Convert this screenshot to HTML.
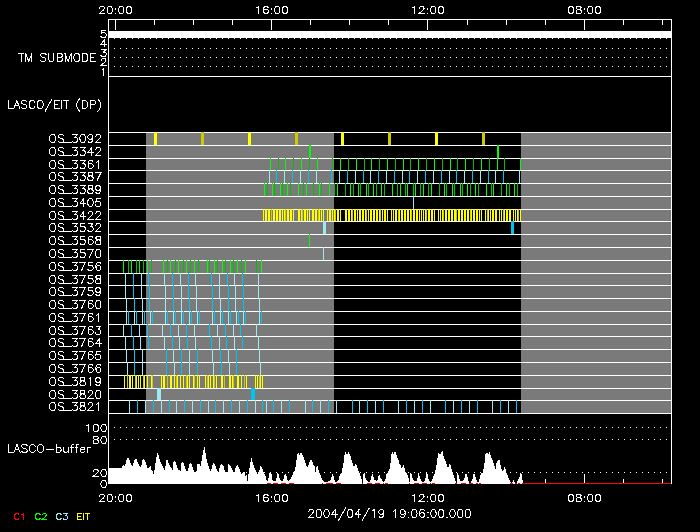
<!DOCTYPE html>
<html><head><meta charset="utf-8"><style>
html,body{margin:0;padding:0;background:#000;width:700px;height:532px;overflow:hidden}
svg{display:block}
</style></head><body>
<svg width="700" height="532" viewBox="0 0 700 532" shape-rendering="crispEdges">
<rect x="0" y="0" width="700" height="532" fill="#000"/>
<rect x="146" y="133" width="188" height="280" fill="#7a7a7a"/>
<rect x="521" y="133" width="150" height="280" fill="#7a7a7a"/>
<rect x="108" y="132" width="564" height="1" fill="#fff"/>
<rect x="108" y="145" width="564" height="1" fill="#fff"/>
<rect x="108" y="158" width="564" height="1" fill="#fff"/>
<rect x="108" y="170" width="564" height="1" fill="#fff"/>
<rect x="108" y="183" width="564" height="1" fill="#fff"/>
<rect x="108" y="196" width="564" height="1" fill="#fff"/>
<rect x="108" y="209" width="564" height="1" fill="#fff"/>
<rect x="108" y="221" width="564" height="1" fill="#fff"/>
<rect x="108" y="234" width="564" height="1" fill="#fff"/>
<rect x="108" y="247" width="564" height="1" fill="#fff"/>
<rect x="108" y="260" width="564" height="1" fill="#fff"/>
<rect x="108" y="273" width="564" height="1" fill="#fff"/>
<rect x="108" y="285" width="564" height="1" fill="#fff"/>
<rect x="108" y="298" width="564" height="1" fill="#fff"/>
<rect x="108" y="311" width="564" height="1" fill="#fff"/>
<rect x="108" y="324" width="564" height="1" fill="#fff"/>
<rect x="108" y="336" width="564" height="1" fill="#fff"/>
<rect x="108" y="349" width="564" height="1" fill="#fff"/>
<rect x="108" y="362" width="564" height="1" fill="#fff"/>
<rect x="108" y="375" width="564" height="1" fill="#fff"/>
<rect x="108" y="388" width="564" height="1" fill="#fff"/>
<rect x="108" y="400" width="564" height="1" fill="#fff"/>
<rect x="108" y="413" width="564" height="1" fill="#fff"/>
<rect x="154" y="132" width="3" height="13" fill="#ffff00"/>
<rect x="201" y="132" width="3" height="13" fill="#cccc00"/>
<rect x="248" y="132" width="3" height="13" fill="#ffff00"/>
<rect x="295" y="132" width="3" height="13" fill="#cccc00"/>
<rect x="341" y="132" width="3" height="13" fill="#ffff00"/>
<rect x="388" y="132" width="3" height="13" fill="#cccc00"/>
<rect x="435" y="132" width="3" height="13" fill="#ffff00"/>
<rect x="482" y="132" width="3" height="13" fill="#cccc00"/>
<rect x="309" y="145" width="2" height="13" fill="#00ff00"/>
<rect x="497" y="145" width="2" height="13" fill="#00ff00"/>
<rect x="270" y="158" width="1" height="12" fill="#00ff00"/>
<rect x="278" y="158" width="1" height="12" fill="#00c000"/>
<rect x="285" y="158" width="1" height="12" fill="#00ff00"/>
<rect x="293" y="158" width="1" height="12" fill="#00c000"/>
<rect x="301" y="158" width="1" height="12" fill="#00ff00"/>
<rect x="309" y="158" width="1" height="12" fill="#00c000"/>
<rect x="317" y="158" width="1" height="12" fill="#00ff00"/>
<rect x="332" y="158" width="1" height="12" fill="#00c000"/>
<rect x="340" y="158" width="1" height="12" fill="#00ff00"/>
<rect x="348" y="158" width="1" height="12" fill="#00c000"/>
<rect x="356" y="158" width="1" height="12" fill="#00ff00"/>
<rect x="364" y="158" width="1" height="12" fill="#00c000"/>
<rect x="371" y="158" width="1" height="12" fill="#00ff00"/>
<rect x="379" y="158" width="1" height="12" fill="#00c000"/>
<rect x="387" y="158" width="1" height="12" fill="#00ff00"/>
<rect x="395" y="158" width="1" height="12" fill="#00c000"/>
<rect x="403" y="158" width="1" height="12" fill="#00ff00"/>
<rect x="410" y="158" width="1" height="12" fill="#00c000"/>
<rect x="418" y="158" width="1" height="12" fill="#00ff00"/>
<rect x="426" y="158" width="1" height="12" fill="#00c000"/>
<rect x="434" y="158" width="1" height="12" fill="#00ff00"/>
<rect x="442" y="158" width="1" height="12" fill="#00c000"/>
<rect x="450" y="158" width="1" height="12" fill="#00ff00"/>
<rect x="457" y="158" width="1" height="12" fill="#00c000"/>
<rect x="465" y="158" width="1" height="12" fill="#00ff00"/>
<rect x="473" y="158" width="1" height="12" fill="#00c000"/>
<rect x="481" y="158" width="1" height="12" fill="#00ff00"/>
<rect x="489" y="158" width="1" height="12" fill="#00c000"/>
<rect x="497" y="158" width="1" height="12" fill="#00ff00"/>
<rect x="504" y="158" width="1" height="12" fill="#00c000"/>
<rect x="520" y="158" width="1" height="12" fill="#00ff00"/>
<rect x="269" y="170" width="1" height="13" fill="#a0e8f4"/>
<rect x="276" y="170" width="1" height="13" fill="#00c4f0"/>
<rect x="284" y="170" width="1" height="13" fill="#a0e8f4"/>
<rect x="292" y="170" width="1" height="13" fill="#00c4f0"/>
<rect x="300" y="170" width="1" height="13" fill="#a0e8f4"/>
<rect x="308" y="170" width="1" height="13" fill="#00c4f0"/>
<rect x="316" y="170" width="1" height="13" fill="#a0e8f4"/>
<rect x="331" y="170" width="1" height="13" fill="#00c4f0"/>
<rect x="339" y="170" width="1" height="13" fill="#a0e8f4"/>
<rect x="347" y="170" width="1" height="13" fill="#00c4f0"/>
<rect x="355" y="170" width="1" height="13" fill="#a0e8f4"/>
<rect x="363" y="170" width="1" height="13" fill="#00c4f0"/>
<rect x="370" y="170" width="1" height="13" fill="#a0e8f4"/>
<rect x="378" y="170" width="1" height="13" fill="#00c4f0"/>
<rect x="386" y="170" width="1" height="13" fill="#a0e8f4"/>
<rect x="394" y="170" width="1" height="13" fill="#00c4f0"/>
<rect x="402" y="170" width="1" height="13" fill="#a0e8f4"/>
<rect x="409" y="170" width="1" height="13" fill="#00c4f0"/>
<rect x="417" y="170" width="1" height="13" fill="#a0e8f4"/>
<rect x="425" y="170" width="1" height="13" fill="#00c4f0"/>
<rect x="433" y="170" width="1" height="13" fill="#a0e8f4"/>
<rect x="441" y="170" width="1" height="13" fill="#00c4f0"/>
<rect x="449" y="170" width="1" height="13" fill="#a0e8f4"/>
<rect x="456" y="170" width="1" height="13" fill="#00c4f0"/>
<rect x="464" y="170" width="1" height="13" fill="#a0e8f4"/>
<rect x="472" y="170" width="1" height="13" fill="#00c4f0"/>
<rect x="480" y="170" width="1" height="13" fill="#a0e8f4"/>
<rect x="488" y="170" width="1" height="13" fill="#00c4f0"/>
<rect x="495" y="170" width="1" height="13" fill="#a0e8f4"/>
<rect x="503" y="170" width="1" height="13" fill="#00c4f0"/>
<rect x="519" y="170" width="1" height="13" fill="#a0e8f4"/>
<rect x="264" y="183" width="1" height="13" fill="#00ff00"/>
<rect x="267" y="183" width="1" height="13" fill="#00c000"/>
<rect x="272" y="183" width="1" height="13" fill="#00ff00"/>
<rect x="274" y="183" width="1" height="13" fill="#00c000"/>
<rect x="280" y="183" width="1" height="13" fill="#00ff00"/>
<rect x="282" y="183" width="1" height="13" fill="#00c000"/>
<rect x="287" y="183" width="1" height="13" fill="#00ff00"/>
<rect x="290" y="183" width="1" height="13" fill="#00c000"/>
<rect x="298" y="183" width="1" height="13" fill="#00ff00"/>
<rect x="303" y="183" width="1" height="13" fill="#00c000"/>
<rect x="306" y="183" width="1" height="13" fill="#00ff00"/>
<rect x="313" y="183" width="1" height="13" fill="#00c000"/>
<rect x="319" y="183" width="1" height="13" fill="#00ff00"/>
<rect x="321" y="183" width="1" height="13" fill="#00c000"/>
<rect x="329" y="183" width="1" height="13" fill="#00ff00"/>
<rect x="334" y="183" width="1" height="13" fill="#00c000"/>
<rect x="337" y="183" width="1" height="13" fill="#00ff00"/>
<rect x="345" y="183" width="1" height="13" fill="#00c000"/>
<rect x="350" y="183" width="1" height="13" fill="#00ff00"/>
<rect x="353" y="183" width="1" height="13" fill="#00c000"/>
<rect x="358" y="183" width="1" height="13" fill="#00ff00"/>
<rect x="360" y="183" width="1" height="13" fill="#00c000"/>
<rect x="366" y="183" width="1" height="13" fill="#00ff00"/>
<rect x="368" y="183" width="1" height="13" fill="#00c000"/>
<rect x="373" y="183" width="1" height="13" fill="#00ff00"/>
<rect x="376" y="183" width="1" height="13" fill="#00c000"/>
<rect x="381" y="183" width="1" height="13" fill="#00ff00"/>
<rect x="384" y="183" width="1" height="13" fill="#00c000"/>
<rect x="392" y="183" width="1" height="13" fill="#00ff00"/>
<rect x="397" y="183" width="1" height="13" fill="#00c000"/>
<rect x="400" y="183" width="1" height="13" fill="#00ff00"/>
<rect x="405" y="183" width="1" height="13" fill="#00c000"/>
<rect x="407" y="183" width="1" height="13" fill="#00ff00"/>
<rect x="413" y="183" width="1" height="13" fill="#00c000"/>
<rect x="415" y="183" width="1" height="13" fill="#00ff00"/>
<rect x="420" y="183" width="1" height="13" fill="#00c000"/>
<rect x="423" y="183" width="1" height="13" fill="#00ff00"/>
<rect x="428" y="183" width="1" height="13" fill="#00c000"/>
<rect x="431" y="183" width="1" height="13" fill="#00ff00"/>
<rect x="439" y="183" width="1" height="13" fill="#00c000"/>
<rect x="444" y="183" width="1" height="13" fill="#00ff00"/>
<rect x="446" y="183" width="1" height="13" fill="#00c000"/>
<rect x="452" y="183" width="1" height="13" fill="#00ff00"/>
<rect x="454" y="183" width="1" height="13" fill="#00c000"/>
<rect x="460" y="183" width="1" height="13" fill="#00ff00"/>
<rect x="462" y="183" width="1" height="13" fill="#00c000"/>
<rect x="467" y="183" width="1" height="13" fill="#00ff00"/>
<rect x="470" y="183" width="1" height="13" fill="#00c000"/>
<rect x="475" y="183" width="1" height="13" fill="#00ff00"/>
<rect x="478" y="183" width="1" height="13" fill="#00c000"/>
<rect x="486" y="183" width="1" height="13" fill="#00ff00"/>
<rect x="491" y="183" width="1" height="13" fill="#00c000"/>
<rect x="493" y="183" width="1" height="13" fill="#00ff00"/>
<rect x="501" y="183" width="1" height="13" fill="#00c000"/>
<rect x="506" y="183" width="1" height="13" fill="#00ff00"/>
<rect x="509" y="183" width="1" height="13" fill="#00c000"/>
<rect x="514" y="183" width="1" height="13" fill="#00ff00"/>
<rect x="517" y="183" width="1" height="13" fill="#00c000"/>
<rect x="413" y="196" width="1" height="13" fill="#a0e8f4"/>
<rect x="263" y="209" width="1" height="12" fill="#ffff00"/>
<rect x="265" y="209" width="1" height="12" fill="#ffff00"/>
<rect x="266" y="209" width="1" height="12" fill="#ffff00"/>
<rect x="268" y="209" width="1" height="12" fill="#ffff00"/>
<rect x="269" y="209" width="1" height="12" fill="#ffff00"/>
<rect x="271" y="209" width="1" height="12" fill="#cccc00"/>
<rect x="273" y="209" width="1" height="12" fill="#ffff00"/>
<rect x="274" y="209" width="1" height="12" fill="#ffff00"/>
<rect x="276" y="209" width="1" height="12" fill="#ffff00"/>
<rect x="277" y="209" width="1" height="12" fill="#ffff00"/>
<rect x="279" y="209" width="1" height="12" fill="#ffff00"/>
<rect x="280" y="209" width="1" height="12" fill="#ffff00"/>
<rect x="282" y="209" width="1" height="12" fill="#ffff00"/>
<rect x="284" y="209" width="1" height="12" fill="#ffff00"/>
<rect x="285" y="209" width="1" height="12" fill="#cccc00"/>
<rect x="287" y="209" width="1" height="12" fill="#ffff00"/>
<rect x="288" y="209" width="1" height="12" fill="#ffff00"/>
<rect x="290" y="209" width="1" height="12" fill="#ffff00"/>
<rect x="291" y="209" width="1" height="12" fill="#ffff00"/>
<rect x="293" y="209" width="1" height="12" fill="#ffff00"/>
<rect x="298" y="209" width="1" height="12" fill="#ffff00"/>
<rect x="299" y="209" width="1" height="12" fill="#ffff00"/>
<rect x="301" y="209" width="1" height="12" fill="#ffff00"/>
<rect x="302" y="209" width="1" height="12" fill="#cccc00"/>
<rect x="304" y="209" width="1" height="12" fill="#ffff00"/>
<rect x="305" y="209" width="1" height="12" fill="#ffff00"/>
<rect x="307" y="209" width="1" height="12" fill="#ffff00"/>
<rect x="309" y="209" width="1" height="12" fill="#ffff00"/>
<rect x="312" y="209" width="1" height="12" fill="#ffff00"/>
<rect x="313" y="209" width="1" height="12" fill="#ffff00"/>
<rect x="315" y="209" width="1" height="12" fill="#ffff00"/>
<rect x="316" y="209" width="1" height="12" fill="#ffff00"/>
<rect x="318" y="209" width="1" height="12" fill="#cccc00"/>
<rect x="319" y="209" width="1" height="12" fill="#ffff00"/>
<rect x="321" y="209" width="1" height="12" fill="#ffff00"/>
<rect x="323" y="209" width="1" height="12" fill="#ffff00"/>
<rect x="327" y="209" width="1" height="12" fill="#ffff00"/>
<rect x="329" y="209" width="1" height="12" fill="#ffff00"/>
<rect x="330" y="209" width="1" height="12" fill="#ffff00"/>
<rect x="332" y="209" width="1" height="12" fill="#ffff00"/>
<rect x="334" y="209" width="1" height="12" fill="#ffff00"/>
<rect x="335" y="209" width="1" height="12" fill="#cccc00"/>
<rect x="337" y="209" width="1" height="12" fill="#ffff00"/>
<rect x="338" y="209" width="1" height="12" fill="#ffff00"/>
<rect x="340" y="209" width="1" height="12" fill="#ffff00"/>
<rect x="345" y="209" width="1" height="12" fill="#ffff00"/>
<rect x="346" y="209" width="1" height="12" fill="#ffff00"/>
<rect x="348" y="209" width="1" height="12" fill="#ffff00"/>
<rect x="349" y="209" width="1" height="12" fill="#ffff00"/>
<rect x="351" y="209" width="1" height="12" fill="#ffff00"/>
<rect x="352" y="209" width="1" height="12" fill="#cccc00"/>
<rect x="354" y="209" width="1" height="12" fill="#ffff00"/>
<rect x="355" y="209" width="1" height="12" fill="#ffff00"/>
<rect x="357" y="209" width="1" height="12" fill="#ffff00"/>
<rect x="359" y="209" width="1" height="12" fill="#ffff00"/>
<rect x="360" y="209" width="1" height="12" fill="#ffff00"/>
<rect x="362" y="209" width="1" height="12" fill="#ffff00"/>
<rect x="363" y="209" width="1" height="12" fill="#ffff00"/>
<rect x="365" y="209" width="1" height="12" fill="#ffff00"/>
<rect x="366" y="209" width="1" height="12" fill="#cccc00"/>
<rect x="368" y="209" width="1" height="12" fill="#ffff00"/>
<rect x="370" y="209" width="1" height="12" fill="#ffff00"/>
<rect x="371" y="209" width="1" height="12" fill="#ffff00"/>
<rect x="373" y="209" width="1" height="12" fill="#ffff00"/>
<rect x="374" y="209" width="1" height="12" fill="#ffff00"/>
<rect x="376" y="209" width="1" height="12" fill="#ffff00"/>
<rect x="377" y="209" width="1" height="12" fill="#ffff00"/>
<rect x="379" y="209" width="1" height="12" fill="#ffff00"/>
<rect x="380" y="209" width="1" height="12" fill="#cccc00"/>
<rect x="382" y="209" width="1" height="12" fill="#ffff00"/>
<rect x="384" y="209" width="1" height="12" fill="#ffff00"/>
<rect x="385" y="209" width="1" height="12" fill="#ffff00"/>
<rect x="387" y="209" width="1" height="12" fill="#ffff00"/>
<rect x="391" y="209" width="1" height="12" fill="#ffff00"/>
<rect x="393" y="209" width="1" height="12" fill="#ffff00"/>
<rect x="395" y="209" width="1" height="12" fill="#ffff00"/>
<rect x="396" y="209" width="1" height="12" fill="#ffff00"/>
<rect x="398" y="209" width="1" height="12" fill="#cccc00"/>
<rect x="399" y="209" width="1" height="12" fill="#ffff00"/>
<rect x="401" y="209" width="1" height="12" fill="#ffff00"/>
<rect x="402" y="209" width="1" height="12" fill="#ffff00"/>
<rect x="404" y="209" width="1" height="12" fill="#ffff00"/>
<rect x="405" y="209" width="1" height="12" fill="#ffff00"/>
<rect x="407" y="209" width="1" height="12" fill="#ffff00"/>
<rect x="408" y="209" width="1" height="12" fill="#ffff00"/>
<rect x="410" y="209" width="1" height="12" fill="#ffff00"/>
<rect x="411" y="209" width="1" height="12" fill="#cccc00"/>
<rect x="413" y="209" width="1" height="12" fill="#ffff00"/>
<rect x="414" y="209" width="1" height="12" fill="#ffff00"/>
<rect x="416" y="209" width="1" height="12" fill="#ffff00"/>
<rect x="417" y="209" width="1" height="12" fill="#ffff00"/>
<rect x="419" y="209" width="1" height="12" fill="#ffff00"/>
<rect x="421" y="209" width="1" height="12" fill="#ffff00"/>
<rect x="423" y="209" width="1" height="12" fill="#ffff00"/>
<rect x="425" y="209" width="1" height="12" fill="#ffff00"/>
<rect x="426" y="209" width="1" height="12" fill="#cccc00"/>
<rect x="428" y="209" width="1" height="12" fill="#ffff00"/>
<rect x="429" y="209" width="1" height="12" fill="#ffff00"/>
<rect x="431" y="209" width="1" height="12" fill="#ffff00"/>
<rect x="432" y="209" width="1" height="12" fill="#ffff00"/>
<rect x="434" y="209" width="1" height="12" fill="#ffff00"/>
<rect x="438" y="209" width="1" height="12" fill="#ffff00"/>
<rect x="440" y="209" width="1" height="12" fill="#ffff00"/>
<rect x="442" y="209" width="1" height="12" fill="#ffff00"/>
<rect x="443" y="209" width="1" height="12" fill="#cccc00"/>
<rect x="445" y="209" width="1" height="12" fill="#ffff00"/>
<rect x="446" y="209" width="1" height="12" fill="#ffff00"/>
<rect x="448" y="209" width="1" height="12" fill="#ffff00"/>
<rect x="449" y="209" width="1" height="12" fill="#ffff00"/>
<rect x="451" y="209" width="1" height="12" fill="#ffff00"/>
<rect x="452" y="209" width="1" height="12" fill="#ffff00"/>
<rect x="454" y="209" width="1" height="12" fill="#ffff00"/>
<rect x="455" y="209" width="1" height="12" fill="#ffff00"/>
<rect x="456" y="209" width="1" height="12" fill="#cccc00"/>
<rect x="458" y="209" width="1" height="12" fill="#ffff00"/>
<rect x="459" y="209" width="1" height="12" fill="#ffff00"/>
<rect x="461" y="209" width="1" height="12" fill="#ffff00"/>
<rect x="462" y="209" width="1" height="12" fill="#ffff00"/>
<rect x="464" y="209" width="1" height="12" fill="#ffff00"/>
<rect x="465" y="209" width="1" height="12" fill="#ffff00"/>
<rect x="467" y="209" width="1" height="12" fill="#ffff00"/>
<rect x="468" y="209" width="1" height="12" fill="#ffff00"/>
<rect x="470" y="209" width="1" height="12" fill="#cccc00"/>
<rect x="471" y="209" width="1" height="12" fill="#ffff00"/>
<rect x="473" y="209" width="1" height="12" fill="#ffff00"/>
<rect x="474" y="209" width="1" height="12" fill="#ffff00"/>
<rect x="476" y="209" width="1" height="12" fill="#ffff00"/>
<rect x="477" y="209" width="1" height="12" fill="#ffff00"/>
<rect x="479" y="209" width="1" height="12" fill="#ffff00"/>
<rect x="481" y="209" width="1" height="12" fill="#ffff00"/>
<rect x="485" y="209" width="1" height="12" fill="#ffff00"/>
<rect x="487" y="209" width="1" height="12" fill="#cccc00"/>
<rect x="488" y="209" width="1" height="12" fill="#ffff00"/>
<rect x="490" y="209" width="1" height="12" fill="#ffff00"/>
<rect x="492" y="209" width="1" height="12" fill="#ffff00"/>
<rect x="493" y="209" width="1" height="12" fill="#ffff00"/>
<rect x="495" y="209" width="1" height="12" fill="#ffff00"/>
<rect x="496" y="209" width="1" height="12" fill="#ffff00"/>
<rect x="499" y="209" width="1" height="12" fill="#ffff00"/>
<rect x="501" y="209" width="1" height="12" fill="#ffff00"/>
<rect x="503" y="209" width="1" height="12" fill="#cccc00"/>
<rect x="504" y="209" width="1" height="12" fill="#ffff00"/>
<rect x="506" y="209" width="1" height="12" fill="#ffff00"/>
<rect x="507" y="209" width="1" height="12" fill="#ffff00"/>
<rect x="509" y="209" width="1" height="12" fill="#ffff00"/>
<rect x="510" y="209" width="1" height="12" fill="#ffff00"/>
<rect x="513" y="209" width="1" height="12" fill="#ffff00"/>
<rect x="515" y="209" width="1" height="12" fill="#ffff00"/>
<rect x="517" y="209" width="1" height="12" fill="#ffff00"/>
<rect x="518" y="209" width="1" height="12" fill="#cccc00"/>
<rect x="520" y="209" width="1" height="12" fill="#ffff00"/>
<rect x="323" y="221" width="3" height="13" fill="#a0e8f4"/>
<rect x="511" y="221" width="3" height="13" fill="#00c4f0"/>
<rect x="309" y="234" width="1" height="13" fill="#00ff00"/>
<rect x="323" y="247" width="1" height="13" fill="#a0e8f4"/>
<rect x="123" y="260" width="1" height="13" fill="#00ff00"/>
<rect x="128" y="260" width="1" height="13" fill="#00c000"/>
<rect x="131" y="260" width="1" height="13" fill="#00ff00"/>
<rect x="136" y="260" width="1" height="13" fill="#00c000"/>
<rect x="139" y="260" width="1" height="13" fill="#00ff00"/>
<rect x="143" y="260" width="1" height="13" fill="#00c000"/>
<rect x="147" y="260" width="1" height="13" fill="#00ff00"/>
<rect x="151" y="260" width="1" height="13" fill="#00c000"/>
<rect x="163" y="260" width="1" height="13" fill="#00ff00"/>
<rect x="167" y="260" width="1" height="13" fill="#00c000"/>
<rect x="170" y="260" width="1" height="13" fill="#00ff00"/>
<rect x="175" y="260" width="1" height="13" fill="#00c000"/>
<rect x="178" y="260" width="1" height="13" fill="#00ff00"/>
<rect x="183" y="260" width="1" height="13" fill="#00c000"/>
<rect x="186" y="260" width="1" height="13" fill="#00ff00"/>
<rect x="190" y="260" width="1" height="13" fill="#00c000"/>
<rect x="194" y="260" width="1" height="13" fill="#00ff00"/>
<rect x="198" y="260" width="1" height="13" fill="#00c000"/>
<rect x="207" y="260" width="1" height="13" fill="#00ff00"/>
<rect x="209" y="260" width="1" height="13" fill="#00c000"/>
<rect x="214" y="260" width="1" height="13" fill="#00ff00"/>
<rect x="217" y="260" width="1" height="13" fill="#00c000"/>
<rect x="222" y="260" width="1" height="13" fill="#00ff00"/>
<rect x="225" y="260" width="1" height="13" fill="#00c000"/>
<rect x="230" y="260" width="1" height="13" fill="#00ff00"/>
<rect x="233" y="260" width="1" height="13" fill="#00c000"/>
<rect x="237" y="260" width="1" height="13" fill="#00ff00"/>
<rect x="241" y="260" width="1" height="13" fill="#00c000"/>
<rect x="245" y="260" width="1" height="13" fill="#00ff00"/>
<rect x="256" y="260" width="1" height="13" fill="#00c000"/>
<rect x="261" y="260" width="1" height="13" fill="#00ff00"/>
<rect x="125" y="273" width="1" height="12" fill="#a0e8f4"/>
<rect x="133" y="273" width="1" height="12" fill="#00c4f0"/>
<rect x="141" y="273" width="1" height="12" fill="#a0e8f4"/>
<rect x="148" y="273" width="1" height="12" fill="#00c4f0"/>
<rect x="164" y="273" width="1" height="12" fill="#a0e8f4"/>
<rect x="172" y="273" width="1" height="12" fill="#00c4f0"/>
<rect x="180" y="273" width="1" height="12" fill="#a0e8f4"/>
<rect x="188" y="273" width="1" height="12" fill="#00c4f0"/>
<rect x="195" y="273" width="1" height="12" fill="#a0e8f4"/>
<rect x="211" y="273" width="1" height="12" fill="#00c4f0"/>
<rect x="219" y="273" width="1" height="12" fill="#a0e8f4"/>
<rect x="227" y="273" width="1" height="12" fill="#00c4f0"/>
<rect x="234" y="273" width="1" height="12" fill="#a0e8f4"/>
<rect x="242" y="273" width="1" height="12" fill="#00c4f0"/>
<rect x="258" y="273" width="1" height="12" fill="#a0e8f4"/>
<rect x="125" y="285" width="1" height="13" fill="#a0e8f4"/>
<rect x="133" y="285" width="1" height="13" fill="#00c4f0"/>
<rect x="141" y="285" width="1" height="13" fill="#a0e8f4"/>
<rect x="149" y="285" width="1" height="13" fill="#00c4f0"/>
<rect x="165" y="285" width="1" height="13" fill="#a0e8f4"/>
<rect x="173" y="285" width="1" height="13" fill="#00c4f0"/>
<rect x="181" y="285" width="1" height="13" fill="#a0e8f4"/>
<rect x="188" y="285" width="1" height="13" fill="#00c4f0"/>
<rect x="196" y="285" width="1" height="13" fill="#a0e8f4"/>
<rect x="212" y="285" width="1" height="13" fill="#00c4f0"/>
<rect x="219" y="285" width="1" height="13" fill="#a0e8f4"/>
<rect x="228" y="285" width="1" height="13" fill="#00c4f0"/>
<rect x="235" y="285" width="1" height="13" fill="#a0e8f4"/>
<rect x="243" y="285" width="1" height="13" fill="#00c4f0"/>
<rect x="258" y="285" width="1" height="13" fill="#a0e8f4"/>
<rect x="126" y="298" width="1" height="13" fill="#a0e8f4"/>
<rect x="134" y="298" width="1" height="13" fill="#00c4f0"/>
<rect x="142" y="298" width="1" height="13" fill="#a0e8f4"/>
<rect x="149" y="298" width="1" height="13" fill="#00c4f0"/>
<rect x="165" y="298" width="1" height="13" fill="#a0e8f4"/>
<rect x="173" y="298" width="1" height="13" fill="#00c4f0"/>
<rect x="181" y="298" width="1" height="13" fill="#a0e8f4"/>
<rect x="189" y="298" width="1" height="13" fill="#00c4f0"/>
<rect x="196" y="298" width="1" height="13" fill="#a0e8f4"/>
<rect x="212" y="298" width="1" height="13" fill="#00c4f0"/>
<rect x="220" y="298" width="1" height="13" fill="#a0e8f4"/>
<rect x="228" y="298" width="1" height="13" fill="#00c4f0"/>
<rect x="235" y="298" width="1" height="13" fill="#a0e8f4"/>
<rect x="243" y="298" width="1" height="13" fill="#00c4f0"/>
<rect x="259" y="298" width="1" height="13" fill="#a0e8f4"/>
<rect x="126" y="311" width="1" height="13" fill="#a0e8f4"/>
<rect x="128" y="311" width="1" height="13" fill="#00c4f0"/>
<rect x="134" y="311" width="1" height="13" fill="#a0e8f4"/>
<rect x="136" y="311" width="1" height="13" fill="#00c4f0"/>
<rect x="142" y="311" width="1" height="13" fill="#a0e8f4"/>
<rect x="144" y="311" width="1" height="13" fill="#00c4f0"/>
<rect x="150" y="311" width="1" height="13" fill="#a0e8f4"/>
<rect x="152" y="311" width="1" height="13" fill="#00c4f0"/>
<rect x="165" y="311" width="1" height="13" fill="#a0e8f4"/>
<rect x="167" y="311" width="1" height="13" fill="#00c4f0"/>
<rect x="173" y="311" width="1" height="13" fill="#a0e8f4"/>
<rect x="175" y="311" width="1" height="13" fill="#00c4f0"/>
<rect x="181" y="311" width="1" height="13" fill="#a0e8f4"/>
<rect x="183" y="311" width="1" height="13" fill="#00c4f0"/>
<rect x="189" y="311" width="1" height="13" fill="#a0e8f4"/>
<rect x="191" y="311" width="1" height="13" fill="#00c4f0"/>
<rect x="197" y="311" width="1" height="13" fill="#a0e8f4"/>
<rect x="199" y="311" width="1" height="13" fill="#00c4f0"/>
<rect x="212" y="311" width="1" height="13" fill="#a0e8f4"/>
<rect x="214" y="311" width="1" height="13" fill="#00c4f0"/>
<rect x="220" y="311" width="1" height="13" fill="#a0e8f4"/>
<rect x="222" y="311" width="1" height="13" fill="#00c4f0"/>
<rect x="228" y="311" width="1" height="13" fill="#a0e8f4"/>
<rect x="230" y="311" width="1" height="13" fill="#00c4f0"/>
<rect x="236" y="311" width="1" height="13" fill="#a0e8f4"/>
<rect x="238" y="311" width="1" height="13" fill="#00c4f0"/>
<rect x="243" y="311" width="1" height="13" fill="#a0e8f4"/>
<rect x="245" y="311" width="1" height="13" fill="#00c4f0"/>
<rect x="259" y="311" width="1" height="13" fill="#a0e8f4"/>
<rect x="261" y="311" width="1" height="13" fill="#00c4f0"/>
<rect x="123" y="324" width="1" height="12" fill="#a0e8f4"/>
<rect x="131" y="324" width="1" height="12" fill="#00c4f0"/>
<rect x="139" y="324" width="1" height="12" fill="#a0e8f4"/>
<rect x="147" y="324" width="1" height="12" fill="#00c4f0"/>
<rect x="162" y="324" width="1" height="12" fill="#a0e8f4"/>
<rect x="170" y="324" width="1" height="12" fill="#00c4f0"/>
<rect x="178" y="324" width="1" height="12" fill="#a0e8f4"/>
<rect x="186" y="324" width="1" height="12" fill="#00c4f0"/>
<rect x="194" y="324" width="1" height="12" fill="#a0e8f4"/>
<rect x="209" y="324" width="1" height="12" fill="#00c4f0"/>
<rect x="217" y="324" width="1" height="12" fill="#a0e8f4"/>
<rect x="225" y="324" width="1" height="12" fill="#00c4f0"/>
<rect x="233" y="324" width="1" height="12" fill="#a0e8f4"/>
<rect x="240" y="324" width="1" height="12" fill="#00c4f0"/>
<rect x="256" y="324" width="1" height="12" fill="#a0e8f4"/>
<rect x="125" y="336" width="1" height="13" fill="#a0e8f4"/>
<rect x="133" y="336" width="1" height="13" fill="#00c4f0"/>
<rect x="140" y="336" width="1" height="13" fill="#a0e8f4"/>
<rect x="148" y="336" width="1" height="13" fill="#00c4f0"/>
<rect x="164" y="336" width="1" height="13" fill="#a0e8f4"/>
<rect x="172" y="336" width="1" height="13" fill="#00c4f0"/>
<rect x="179" y="336" width="1" height="13" fill="#a0e8f4"/>
<rect x="187" y="336" width="1" height="13" fill="#00c4f0"/>
<rect x="195" y="336" width="1" height="13" fill="#a0e8f4"/>
<rect x="211" y="336" width="1" height="13" fill="#00c4f0"/>
<rect x="219" y="336" width="1" height="13" fill="#a0e8f4"/>
<rect x="226" y="336" width="1" height="13" fill="#00c4f0"/>
<rect x="234" y="336" width="1" height="13" fill="#a0e8f4"/>
<rect x="242" y="336" width="1" height="13" fill="#00c4f0"/>
<rect x="258" y="336" width="1" height="13" fill="#a0e8f4"/>
<rect x="126" y="349" width="1" height="13" fill="#a0e8f4"/>
<rect x="134" y="349" width="1" height="13" fill="#00c4f0"/>
<rect x="142" y="349" width="1" height="13" fill="#a0e8f4"/>
<rect x="166" y="349" width="1" height="13" fill="#00c4f0"/>
<rect x="173" y="349" width="1" height="13" fill="#a0e8f4"/>
<rect x="181" y="349" width="1" height="13" fill="#00c4f0"/>
<rect x="189" y="349" width="1" height="13" fill="#a0e8f4"/>
<rect x="197" y="349" width="1" height="13" fill="#00c4f0"/>
<rect x="212" y="349" width="1" height="13" fill="#a0e8f4"/>
<rect x="220" y="349" width="1" height="13" fill="#00c4f0"/>
<rect x="228" y="349" width="1" height="13" fill="#a0e8f4"/>
<rect x="236" y="349" width="1" height="13" fill="#00c4f0"/>
<rect x="259" y="349" width="1" height="13" fill="#a0e8f4"/>
<rect x="127" y="362" width="1" height="13" fill="#a0e8f4"/>
<rect x="134" y="362" width="1" height="13" fill="#00c4f0"/>
<rect x="142" y="362" width="1" height="13" fill="#a0e8f4"/>
<rect x="166" y="362" width="1" height="13" fill="#00c4f0"/>
<rect x="174" y="362" width="1" height="13" fill="#a0e8f4"/>
<rect x="181" y="362" width="1" height="13" fill="#00c4f0"/>
<rect x="189" y="362" width="1" height="13" fill="#a0e8f4"/>
<rect x="197" y="362" width="1" height="13" fill="#00c4f0"/>
<rect x="213" y="362" width="1" height="13" fill="#a0e8f4"/>
<rect x="221" y="362" width="1" height="13" fill="#00c4f0"/>
<rect x="229" y="362" width="1" height="13" fill="#a0e8f4"/>
<rect x="236" y="362" width="1" height="13" fill="#00c4f0"/>
<rect x="260" y="362" width="1" height="13" fill="#a0e8f4"/>
<rect x="124" y="375" width="1" height="13" fill="#ffff00"/>
<rect x="127" y="375" width="1" height="13" fill="#cccc00"/>
<rect x="129" y="375" width="1" height="13" fill="#ffff00"/>
<rect x="130" y="375" width="1" height="13" fill="#ffff00"/>
<rect x="132" y="375" width="1" height="13" fill="#ffff00"/>
<rect x="135" y="375" width="1" height="13" fill="#cccc00"/>
<rect x="136" y="375" width="1" height="13" fill="#ffff00"/>
<rect x="138" y="375" width="1" height="13" fill="#ffff00"/>
<rect x="140" y="375" width="1" height="13" fill="#ffff00"/>
<rect x="143" y="375" width="1" height="13" fill="#cccc00"/>
<rect x="144" y="375" width="1" height="13" fill="#ffff00"/>
<rect x="147" y="375" width="1" height="13" fill="#ffff00"/>
<rect x="151" y="375" width="1" height="13" fill="#ffff00"/>
<rect x="152" y="375" width="1" height="13" fill="#cccc00"/>
<rect x="161" y="375" width="1" height="13" fill="#ffff00"/>
<rect x="163" y="375" width="1" height="13" fill="#ffff00"/>
<rect x="164" y="375" width="1" height="13" fill="#ffff00"/>
<rect x="167" y="375" width="1" height="13" fill="#cccc00"/>
<rect x="170" y="375" width="1" height="13" fill="#ffff00"/>
<rect x="171" y="375" width="1" height="13" fill="#ffff00"/>
<rect x="174" y="375" width="1" height="13" fill="#ffff00"/>
<rect x="176" y="375" width="1" height="13" fill="#cccc00"/>
<rect x="177" y="375" width="1" height="13" fill="#ffff00"/>
<rect x="180" y="375" width="1" height="13" fill="#ffff00"/>
<rect x="183" y="375" width="1" height="13" fill="#ffff00"/>
<rect x="186" y="375" width="1" height="13" fill="#cccc00"/>
<rect x="187" y="375" width="1" height="13" fill="#ffff00"/>
<rect x="189" y="375" width="1" height="13" fill="#ffff00"/>
<rect x="193" y="375" width="1" height="13" fill="#ffff00"/>
<rect x="194" y="375" width="1" height="13" fill="#cccc00"/>
<rect x="197" y="375" width="1" height="13" fill="#ffff00"/>
<rect x="199" y="375" width="1" height="13" fill="#ffff00"/>
<rect x="205" y="375" width="1" height="13" fill="#ffff00"/>
<rect x="207" y="375" width="1" height="13" fill="#cccc00"/>
<rect x="208" y="375" width="1" height="13" fill="#ffff00"/>
<rect x="210" y="375" width="1" height="13" fill="#ffff00"/>
<rect x="213" y="375" width="1" height="13" fill="#ffff00"/>
<rect x="214" y="375" width="1" height="13" fill="#cccc00"/>
<rect x="216" y="375" width="1" height="13" fill="#ffff00"/>
<rect x="221" y="375" width="1" height="13" fill="#ffff00"/>
<rect x="222" y="375" width="1" height="13" fill="#ffff00"/>
<rect x="224" y="375" width="1" height="13" fill="#cccc00"/>
<rect x="229" y="375" width="1" height="13" fill="#ffff00"/>
<rect x="230" y="375" width="1" height="13" fill="#ffff00"/>
<rect x="232" y="375" width="1" height="13" fill="#ffff00"/>
<rect x="233" y="375" width="1" height="13" fill="#cccc00"/>
<rect x="237" y="375" width="1" height="13" fill="#ffff00"/>
<rect x="238" y="375" width="1" height="13" fill="#ffff00"/>
<rect x="241" y="375" width="1" height="13" fill="#ffff00"/>
<rect x="244" y="375" width="1" height="13" fill="#cccc00"/>
<rect x="246" y="375" width="1" height="13" fill="#ffff00"/>
<rect x="255" y="375" width="1" height="13" fill="#ffff00"/>
<rect x="257" y="375" width="1" height="13" fill="#ffff00"/>
<rect x="259" y="375" width="1" height="13" fill="#cccc00"/>
<rect x="260" y="375" width="1" height="13" fill="#ffff00"/>
<rect x="262" y="375" width="1" height="13" fill="#ffff00"/>
<rect x="157" y="388" width="4" height="12" fill="#a0e8f4"/>
<rect x="251" y="388" width="4" height="12" fill="#00c4f0"/>
<rect x="129" y="400" width="1" height="13" fill="#a0e8f4"/>
<rect x="137" y="400" width="1" height="13" fill="#00c4f0"/>
<rect x="145" y="400" width="1" height="13" fill="#a0e8f4"/>
<rect x="153" y="400" width="1" height="13" fill="#00c4f0"/>
<rect x="161" y="400" width="1" height="13" fill="#a0e8f4"/>
<rect x="169" y="400" width="1" height="13" fill="#00c4f0"/>
<rect x="176" y="400" width="1" height="13" fill="#a0e8f4"/>
<rect x="184" y="400" width="1" height="13" fill="#00c4f0"/>
<rect x="192" y="400" width="1" height="13" fill="#a0e8f4"/>
<rect x="200" y="400" width="1" height="13" fill="#00c4f0"/>
<rect x="208" y="400" width="1" height="13" fill="#a0e8f4"/>
<rect x="215" y="400" width="1" height="13" fill="#00c4f0"/>
<rect x="223" y="400" width="1" height="13" fill="#a0e8f4"/>
<rect x="231" y="400" width="1" height="13" fill="#00c4f0"/>
<rect x="239" y="400" width="1" height="13" fill="#a0e8f4"/>
<rect x="247" y="400" width="1" height="13" fill="#00c4f0"/>
<rect x="255" y="400" width="1" height="13" fill="#a0e8f4"/>
<rect x="262" y="400" width="1" height="13" fill="#00c4f0"/>
<rect x="266" y="400" width="1" height="13" fill="#a0e8f4"/>
<rect x="273" y="400" width="1" height="13" fill="#00c4f0"/>
<rect x="281" y="400" width="1" height="13" fill="#a0e8f4"/>
<rect x="289" y="400" width="1" height="13" fill="#00c4f0"/>
<rect x="305" y="400" width="1" height="13" fill="#a0e8f4"/>
<rect x="312" y="400" width="1" height="13" fill="#00c4f0"/>
<rect x="320" y="400" width="1" height="13" fill="#a0e8f4"/>
<rect x="328" y="400" width="1" height="13" fill="#00c4f0"/>
<rect x="336" y="400" width="1" height="13" fill="#a0e8f4"/>
<rect x="352" y="400" width="1" height="13" fill="#00c4f0"/>
<rect x="359" y="400" width="1" height="13" fill="#a0e8f4"/>
<rect x="367" y="400" width="1" height="13" fill="#00c4f0"/>
<rect x="375" y="400" width="1" height="13" fill="#a0e8f4"/>
<rect x="383" y="400" width="1" height="13" fill="#00c4f0"/>
<rect x="398" y="400" width="1" height="13" fill="#a0e8f4"/>
<rect x="406" y="400" width="1" height="13" fill="#00c4f0"/>
<rect x="414" y="400" width="1" height="13" fill="#a0e8f4"/>
<rect x="422" y="400" width="1" height="13" fill="#00c4f0"/>
<rect x="430" y="400" width="1" height="13" fill="#a0e8f4"/>
<rect x="445" y="400" width="1" height="13" fill="#00c4f0"/>
<rect x="453" y="400" width="1" height="13" fill="#a0e8f4"/>
<rect x="461" y="400" width="1" height="13" fill="#00c4f0"/>
<rect x="469" y="400" width="1" height="13" fill="#a0e8f4"/>
<rect x="477" y="400" width="1" height="13" fill="#00c4f0"/>
<rect x="492" y="400" width="1" height="13" fill="#a0e8f4"/>
<rect x="500" y="400" width="1" height="13" fill="#00c4f0"/>
<rect x="508" y="400" width="1" height="13" fill="#a0e8f4"/>
<rect x="516" y="400" width="1" height="13" fill="#00c4f0"/>
<rect x="108" y="19" width="564" height="1" fill="#fff"/>
<rect x="108" y="76" width="564" height="1" fill="#fff"/>
<rect x="108" y="19" width="1" height="465" fill="#fff"/>
<rect x="671" y="19" width="1" height="465" fill="#fff"/>
<rect x="115" y="20" width="1" height="10" fill="#fff"/>
<rect x="154" y="20" width="1" height="5" fill="#fff"/>
<rect x="193" y="20" width="1" height="5" fill="#fff"/>
<rect x="232" y="20" width="1" height="5" fill="#fff"/>
<rect x="271" y="20" width="1" height="10" fill="#fff"/>
<rect x="310" y="20" width="1" height="5" fill="#fff"/>
<rect x="349" y="20" width="1" height="5" fill="#fff"/>
<rect x="388" y="20" width="1" height="5" fill="#fff"/>
<rect x="427" y="20" width="1" height="10" fill="#fff"/>
<rect x="467" y="20" width="1" height="5" fill="#fff"/>
<rect x="506" y="20" width="1" height="5" fill="#fff"/>
<rect x="545" y="20" width="1" height="5" fill="#fff"/>
<rect x="584" y="20" width="1" height="10" fill="#fff"/>
<rect x="623" y="20" width="1" height="5" fill="#fff"/>
<rect x="662" y="20" width="1" height="5" fill="#fff"/>
<rect x="109" y="31" width="562" height="7" fill="#fff"/>
<rect x="114" y="38" width="1" height="1" fill="#fff"/>
<rect x="120" y="38" width="1" height="1" fill="#fff"/>
<rect x="126" y="38" width="1" height="1" fill="#fff"/>
<rect x="132" y="38" width="1" height="1" fill="#fff"/>
<rect x="138" y="38" width="1" height="1" fill="#fff"/>
<rect x="144" y="38" width="1" height="1" fill="#fff"/>
<rect x="150" y="38" width="1" height="1" fill="#fff"/>
<rect x="156" y="38" width="1" height="1" fill="#fff"/>
<rect x="162" y="38" width="1" height="1" fill="#fff"/>
<rect x="168" y="38" width="1" height="1" fill="#fff"/>
<rect x="174" y="38" width="1" height="1" fill="#fff"/>
<rect x="180" y="38" width="1" height="1" fill="#fff"/>
<rect x="186" y="38" width="1" height="1" fill="#fff"/>
<rect x="192" y="38" width="1" height="1" fill="#fff"/>
<rect x="198" y="38" width="1" height="1" fill="#fff"/>
<rect x="204" y="38" width="1" height="1" fill="#fff"/>
<rect x="210" y="38" width="1" height="1" fill="#fff"/>
<rect x="216" y="38" width="1" height="1" fill="#fff"/>
<rect x="222" y="38" width="1" height="1" fill="#fff"/>
<rect x="228" y="38" width="1" height="1" fill="#fff"/>
<rect x="234" y="38" width="1" height="1" fill="#fff"/>
<rect x="240" y="38" width="1" height="1" fill="#fff"/>
<rect x="246" y="38" width="1" height="1" fill="#fff"/>
<rect x="252" y="38" width="1" height="1" fill="#fff"/>
<rect x="258" y="38" width="1" height="1" fill="#fff"/>
<rect x="264" y="38" width="1" height="1" fill="#fff"/>
<rect x="270" y="38" width="1" height="1" fill="#fff"/>
<rect x="276" y="38" width="1" height="1" fill="#fff"/>
<rect x="282" y="38" width="1" height="1" fill="#fff"/>
<rect x="288" y="38" width="1" height="1" fill="#fff"/>
<rect x="294" y="38" width="1" height="1" fill="#fff"/>
<rect x="300" y="38" width="1" height="1" fill="#fff"/>
<rect x="306" y="38" width="1" height="1" fill="#fff"/>
<rect x="312" y="38" width="1" height="1" fill="#fff"/>
<rect x="318" y="38" width="1" height="1" fill="#fff"/>
<rect x="324" y="38" width="1" height="1" fill="#fff"/>
<rect x="330" y="38" width="1" height="1" fill="#fff"/>
<rect x="336" y="38" width="1" height="1" fill="#fff"/>
<rect x="342" y="38" width="1" height="1" fill="#fff"/>
<rect x="348" y="38" width="1" height="1" fill="#fff"/>
<rect x="354" y="38" width="1" height="1" fill="#fff"/>
<rect x="360" y="38" width="1" height="1" fill="#fff"/>
<rect x="366" y="38" width="1" height="1" fill="#fff"/>
<rect x="372" y="38" width="1" height="1" fill="#fff"/>
<rect x="378" y="38" width="1" height="1" fill="#fff"/>
<rect x="384" y="38" width="1" height="1" fill="#fff"/>
<rect x="390" y="38" width="1" height="1" fill="#fff"/>
<rect x="396" y="38" width="1" height="1" fill="#fff"/>
<rect x="402" y="38" width="1" height="1" fill="#fff"/>
<rect x="408" y="38" width="1" height="1" fill="#fff"/>
<rect x="414" y="38" width="1" height="1" fill="#fff"/>
<rect x="420" y="38" width="1" height="1" fill="#fff"/>
<rect x="426" y="38" width="1" height="1" fill="#fff"/>
<rect x="432" y="38" width="1" height="1" fill="#fff"/>
<rect x="438" y="38" width="1" height="1" fill="#fff"/>
<rect x="444" y="38" width="1" height="1" fill="#fff"/>
<rect x="450" y="38" width="1" height="1" fill="#fff"/>
<rect x="456" y="38" width="1" height="1" fill="#fff"/>
<rect x="462" y="38" width="1" height="1" fill="#fff"/>
<rect x="468" y="38" width="1" height="1" fill="#fff"/>
<rect x="474" y="38" width="1" height="1" fill="#fff"/>
<rect x="480" y="38" width="1" height="1" fill="#fff"/>
<rect x="486" y="38" width="1" height="1" fill="#fff"/>
<rect x="492" y="38" width="1" height="1" fill="#fff"/>
<rect x="498" y="38" width="1" height="1" fill="#fff"/>
<rect x="504" y="38" width="1" height="1" fill="#fff"/>
<rect x="510" y="38" width="1" height="1" fill="#fff"/>
<rect x="516" y="38" width="1" height="1" fill="#fff"/>
<rect x="522" y="38" width="1" height="1" fill="#fff"/>
<rect x="528" y="38" width="1" height="1" fill="#fff"/>
<rect x="534" y="38" width="1" height="1" fill="#fff"/>
<rect x="540" y="38" width="1" height="1" fill="#fff"/>
<rect x="546" y="38" width="1" height="1" fill="#fff"/>
<rect x="552" y="38" width="1" height="1" fill="#fff"/>
<rect x="558" y="38" width="1" height="1" fill="#fff"/>
<rect x="564" y="38" width="1" height="1" fill="#fff"/>
<rect x="570" y="38" width="1" height="1" fill="#fff"/>
<rect x="576" y="38" width="1" height="1" fill="#fff"/>
<rect x="582" y="38" width="1" height="1" fill="#fff"/>
<rect x="588" y="38" width="1" height="1" fill="#fff"/>
<rect x="594" y="38" width="1" height="1" fill="#fff"/>
<rect x="600" y="38" width="1" height="1" fill="#fff"/>
<rect x="606" y="38" width="1" height="1" fill="#fff"/>
<rect x="612" y="38" width="1" height="1" fill="#fff"/>
<rect x="618" y="38" width="1" height="1" fill="#fff"/>
<rect x="624" y="38" width="1" height="1" fill="#fff"/>
<rect x="630" y="38" width="1" height="1" fill="#fff"/>
<rect x="636" y="38" width="1" height="1" fill="#fff"/>
<rect x="642" y="38" width="1" height="1" fill="#fff"/>
<rect x="648" y="38" width="1" height="1" fill="#fff"/>
<rect x="654" y="38" width="1" height="1" fill="#fff"/>
<rect x="660" y="38" width="1" height="1" fill="#fff"/>
<rect x="666" y="38" width="1" height="1" fill="#fff"/>
<rect x="114" y="48" width="1" height="1" fill="#fff"/>
<rect x="120" y="48" width="1" height="1" fill="#fff"/>
<rect x="126" y="48" width="1" height="1" fill="#fff"/>
<rect x="132" y="48" width="1" height="1" fill="#fff"/>
<rect x="138" y="48" width="1" height="1" fill="#fff"/>
<rect x="144" y="48" width="1" height="1" fill="#fff"/>
<rect x="150" y="48" width="1" height="1" fill="#fff"/>
<rect x="156" y="48" width="1" height="1" fill="#fff"/>
<rect x="162" y="48" width="1" height="1" fill="#fff"/>
<rect x="168" y="48" width="1" height="1" fill="#fff"/>
<rect x="174" y="48" width="1" height="1" fill="#fff"/>
<rect x="180" y="48" width="1" height="1" fill="#fff"/>
<rect x="186" y="48" width="1" height="1" fill="#fff"/>
<rect x="192" y="48" width="1" height="1" fill="#fff"/>
<rect x="198" y="48" width="1" height="1" fill="#fff"/>
<rect x="204" y="48" width="1" height="1" fill="#fff"/>
<rect x="210" y="48" width="1" height="1" fill="#fff"/>
<rect x="216" y="48" width="1" height="1" fill="#fff"/>
<rect x="222" y="48" width="1" height="1" fill="#fff"/>
<rect x="228" y="48" width="1" height="1" fill="#fff"/>
<rect x="234" y="48" width="1" height="1" fill="#fff"/>
<rect x="240" y="48" width="1" height="1" fill="#fff"/>
<rect x="246" y="48" width="1" height="1" fill="#fff"/>
<rect x="252" y="48" width="1" height="1" fill="#fff"/>
<rect x="258" y="48" width="1" height="1" fill="#fff"/>
<rect x="264" y="48" width="1" height="1" fill="#fff"/>
<rect x="270" y="48" width="1" height="1" fill="#fff"/>
<rect x="276" y="48" width="1" height="1" fill="#fff"/>
<rect x="282" y="48" width="1" height="1" fill="#fff"/>
<rect x="288" y="48" width="1" height="1" fill="#fff"/>
<rect x="294" y="48" width="1" height="1" fill="#fff"/>
<rect x="300" y="48" width="1" height="1" fill="#fff"/>
<rect x="306" y="48" width="1" height="1" fill="#fff"/>
<rect x="312" y="48" width="1" height="1" fill="#fff"/>
<rect x="318" y="48" width="1" height="1" fill="#fff"/>
<rect x="324" y="48" width="1" height="1" fill="#fff"/>
<rect x="330" y="48" width="1" height="1" fill="#fff"/>
<rect x="336" y="48" width="1" height="1" fill="#fff"/>
<rect x="342" y="48" width="1" height="1" fill="#fff"/>
<rect x="348" y="48" width="1" height="1" fill="#fff"/>
<rect x="354" y="48" width="1" height="1" fill="#fff"/>
<rect x="360" y="48" width="1" height="1" fill="#fff"/>
<rect x="366" y="48" width="1" height="1" fill="#fff"/>
<rect x="372" y="48" width="1" height="1" fill="#fff"/>
<rect x="378" y="48" width="1" height="1" fill="#fff"/>
<rect x="384" y="48" width="1" height="1" fill="#fff"/>
<rect x="390" y="48" width="1" height="1" fill="#fff"/>
<rect x="396" y="48" width="1" height="1" fill="#fff"/>
<rect x="402" y="48" width="1" height="1" fill="#fff"/>
<rect x="408" y="48" width="1" height="1" fill="#fff"/>
<rect x="414" y="48" width="1" height="1" fill="#fff"/>
<rect x="420" y="48" width="1" height="1" fill="#fff"/>
<rect x="426" y="48" width="1" height="1" fill="#fff"/>
<rect x="432" y="48" width="1" height="1" fill="#fff"/>
<rect x="438" y="48" width="1" height="1" fill="#fff"/>
<rect x="444" y="48" width="1" height="1" fill="#fff"/>
<rect x="450" y="48" width="1" height="1" fill="#fff"/>
<rect x="456" y="48" width="1" height="1" fill="#fff"/>
<rect x="462" y="48" width="1" height="1" fill="#fff"/>
<rect x="468" y="48" width="1" height="1" fill="#fff"/>
<rect x="474" y="48" width="1" height="1" fill="#fff"/>
<rect x="480" y="48" width="1" height="1" fill="#fff"/>
<rect x="486" y="48" width="1" height="1" fill="#fff"/>
<rect x="492" y="48" width="1" height="1" fill="#fff"/>
<rect x="498" y="48" width="1" height="1" fill="#fff"/>
<rect x="504" y="48" width="1" height="1" fill="#fff"/>
<rect x="510" y="48" width="1" height="1" fill="#fff"/>
<rect x="516" y="48" width="1" height="1" fill="#fff"/>
<rect x="522" y="48" width="1" height="1" fill="#fff"/>
<rect x="528" y="48" width="1" height="1" fill="#fff"/>
<rect x="534" y="48" width="1" height="1" fill="#fff"/>
<rect x="540" y="48" width="1" height="1" fill="#fff"/>
<rect x="546" y="48" width="1" height="1" fill="#fff"/>
<rect x="552" y="48" width="1" height="1" fill="#fff"/>
<rect x="558" y="48" width="1" height="1" fill="#fff"/>
<rect x="564" y="48" width="1" height="1" fill="#fff"/>
<rect x="570" y="48" width="1" height="1" fill="#fff"/>
<rect x="576" y="48" width="1" height="1" fill="#fff"/>
<rect x="582" y="48" width="1" height="1" fill="#fff"/>
<rect x="588" y="48" width="1" height="1" fill="#fff"/>
<rect x="594" y="48" width="1" height="1" fill="#fff"/>
<rect x="600" y="48" width="1" height="1" fill="#fff"/>
<rect x="606" y="48" width="1" height="1" fill="#fff"/>
<rect x="612" y="48" width="1" height="1" fill="#fff"/>
<rect x="618" y="48" width="1" height="1" fill="#fff"/>
<rect x="624" y="48" width="1" height="1" fill="#fff"/>
<rect x="630" y="48" width="1" height="1" fill="#fff"/>
<rect x="636" y="48" width="1" height="1" fill="#fff"/>
<rect x="642" y="48" width="1" height="1" fill="#fff"/>
<rect x="648" y="48" width="1" height="1" fill="#fff"/>
<rect x="654" y="48" width="1" height="1" fill="#fff"/>
<rect x="660" y="48" width="1" height="1" fill="#fff"/>
<rect x="666" y="48" width="1" height="1" fill="#fff"/>
<rect x="114" y="57" width="1" height="1" fill="#fff"/>
<rect x="120" y="57" width="1" height="1" fill="#fff"/>
<rect x="126" y="57" width="1" height="1" fill="#fff"/>
<rect x="132" y="57" width="1" height="1" fill="#fff"/>
<rect x="138" y="57" width="1" height="1" fill="#fff"/>
<rect x="144" y="57" width="1" height="1" fill="#fff"/>
<rect x="150" y="57" width="1" height="1" fill="#fff"/>
<rect x="156" y="57" width="1" height="1" fill="#fff"/>
<rect x="162" y="57" width="1" height="1" fill="#fff"/>
<rect x="168" y="57" width="1" height="1" fill="#fff"/>
<rect x="174" y="57" width="1" height="1" fill="#fff"/>
<rect x="180" y="57" width="1" height="1" fill="#fff"/>
<rect x="186" y="57" width="1" height="1" fill="#fff"/>
<rect x="192" y="57" width="1" height="1" fill="#fff"/>
<rect x="198" y="57" width="1" height="1" fill="#fff"/>
<rect x="204" y="57" width="1" height="1" fill="#fff"/>
<rect x="210" y="57" width="1" height="1" fill="#fff"/>
<rect x="216" y="57" width="1" height="1" fill="#fff"/>
<rect x="222" y="57" width="1" height="1" fill="#fff"/>
<rect x="228" y="57" width="1" height="1" fill="#fff"/>
<rect x="234" y="57" width="1" height="1" fill="#fff"/>
<rect x="240" y="57" width="1" height="1" fill="#fff"/>
<rect x="246" y="57" width="1" height="1" fill="#fff"/>
<rect x="252" y="57" width="1" height="1" fill="#fff"/>
<rect x="258" y="57" width="1" height="1" fill="#fff"/>
<rect x="264" y="57" width="1" height="1" fill="#fff"/>
<rect x="270" y="57" width="1" height="1" fill="#fff"/>
<rect x="276" y="57" width="1" height="1" fill="#fff"/>
<rect x="282" y="57" width="1" height="1" fill="#fff"/>
<rect x="288" y="57" width="1" height="1" fill="#fff"/>
<rect x="294" y="57" width="1" height="1" fill="#fff"/>
<rect x="300" y="57" width="1" height="1" fill="#fff"/>
<rect x="306" y="57" width="1" height="1" fill="#fff"/>
<rect x="312" y="57" width="1" height="1" fill="#fff"/>
<rect x="318" y="57" width="1" height="1" fill="#fff"/>
<rect x="324" y="57" width="1" height="1" fill="#fff"/>
<rect x="330" y="57" width="1" height="1" fill="#fff"/>
<rect x="336" y="57" width="1" height="1" fill="#fff"/>
<rect x="342" y="57" width="1" height="1" fill="#fff"/>
<rect x="348" y="57" width="1" height="1" fill="#fff"/>
<rect x="354" y="57" width="1" height="1" fill="#fff"/>
<rect x="360" y="57" width="1" height="1" fill="#fff"/>
<rect x="366" y="57" width="1" height="1" fill="#fff"/>
<rect x="372" y="57" width="1" height="1" fill="#fff"/>
<rect x="378" y="57" width="1" height="1" fill="#fff"/>
<rect x="384" y="57" width="1" height="1" fill="#fff"/>
<rect x="390" y="57" width="1" height="1" fill="#fff"/>
<rect x="396" y="57" width="1" height="1" fill="#fff"/>
<rect x="402" y="57" width="1" height="1" fill="#fff"/>
<rect x="408" y="57" width="1" height="1" fill="#fff"/>
<rect x="414" y="57" width="1" height="1" fill="#fff"/>
<rect x="420" y="57" width="1" height="1" fill="#fff"/>
<rect x="426" y="57" width="1" height="1" fill="#fff"/>
<rect x="432" y="57" width="1" height="1" fill="#fff"/>
<rect x="438" y="57" width="1" height="1" fill="#fff"/>
<rect x="444" y="57" width="1" height="1" fill="#fff"/>
<rect x="450" y="57" width="1" height="1" fill="#fff"/>
<rect x="456" y="57" width="1" height="1" fill="#fff"/>
<rect x="462" y="57" width="1" height="1" fill="#fff"/>
<rect x="468" y="57" width="1" height="1" fill="#fff"/>
<rect x="474" y="57" width="1" height="1" fill="#fff"/>
<rect x="480" y="57" width="1" height="1" fill="#fff"/>
<rect x="486" y="57" width="1" height="1" fill="#fff"/>
<rect x="492" y="57" width="1" height="1" fill="#fff"/>
<rect x="498" y="57" width="1" height="1" fill="#fff"/>
<rect x="504" y="57" width="1" height="1" fill="#fff"/>
<rect x="510" y="57" width="1" height="1" fill="#fff"/>
<rect x="516" y="57" width="1" height="1" fill="#fff"/>
<rect x="522" y="57" width="1" height="1" fill="#fff"/>
<rect x="528" y="57" width="1" height="1" fill="#fff"/>
<rect x="534" y="57" width="1" height="1" fill="#fff"/>
<rect x="540" y="57" width="1" height="1" fill="#fff"/>
<rect x="546" y="57" width="1" height="1" fill="#fff"/>
<rect x="552" y="57" width="1" height="1" fill="#fff"/>
<rect x="558" y="57" width="1" height="1" fill="#fff"/>
<rect x="564" y="57" width="1" height="1" fill="#fff"/>
<rect x="570" y="57" width="1" height="1" fill="#fff"/>
<rect x="576" y="57" width="1" height="1" fill="#fff"/>
<rect x="582" y="57" width="1" height="1" fill="#fff"/>
<rect x="588" y="57" width="1" height="1" fill="#fff"/>
<rect x="594" y="57" width="1" height="1" fill="#fff"/>
<rect x="600" y="57" width="1" height="1" fill="#fff"/>
<rect x="606" y="57" width="1" height="1" fill="#fff"/>
<rect x="612" y="57" width="1" height="1" fill="#fff"/>
<rect x="618" y="57" width="1" height="1" fill="#fff"/>
<rect x="624" y="57" width="1" height="1" fill="#fff"/>
<rect x="630" y="57" width="1" height="1" fill="#fff"/>
<rect x="636" y="57" width="1" height="1" fill="#fff"/>
<rect x="642" y="57" width="1" height="1" fill="#fff"/>
<rect x="648" y="57" width="1" height="1" fill="#fff"/>
<rect x="654" y="57" width="1" height="1" fill="#fff"/>
<rect x="660" y="57" width="1" height="1" fill="#fff"/>
<rect x="666" y="57" width="1" height="1" fill="#fff"/>
<rect x="114" y="66" width="1" height="1" fill="#fff"/>
<rect x="120" y="66" width="1" height="1" fill="#fff"/>
<rect x="126" y="66" width="1" height="1" fill="#fff"/>
<rect x="132" y="66" width="1" height="1" fill="#fff"/>
<rect x="138" y="66" width="1" height="1" fill="#fff"/>
<rect x="144" y="66" width="1" height="1" fill="#fff"/>
<rect x="150" y="66" width="1" height="1" fill="#fff"/>
<rect x="156" y="66" width="1" height="1" fill="#fff"/>
<rect x="162" y="66" width="1" height="1" fill="#fff"/>
<rect x="168" y="66" width="1" height="1" fill="#fff"/>
<rect x="174" y="66" width="1" height="1" fill="#fff"/>
<rect x="180" y="66" width="1" height="1" fill="#fff"/>
<rect x="186" y="66" width="1" height="1" fill="#fff"/>
<rect x="192" y="66" width="1" height="1" fill="#fff"/>
<rect x="198" y="66" width="1" height="1" fill="#fff"/>
<rect x="204" y="66" width="1" height="1" fill="#fff"/>
<rect x="210" y="66" width="1" height="1" fill="#fff"/>
<rect x="216" y="66" width="1" height="1" fill="#fff"/>
<rect x="222" y="66" width="1" height="1" fill="#fff"/>
<rect x="228" y="66" width="1" height="1" fill="#fff"/>
<rect x="234" y="66" width="1" height="1" fill="#fff"/>
<rect x="240" y="66" width="1" height="1" fill="#fff"/>
<rect x="246" y="66" width="1" height="1" fill="#fff"/>
<rect x="252" y="66" width="1" height="1" fill="#fff"/>
<rect x="258" y="66" width="1" height="1" fill="#fff"/>
<rect x="264" y="66" width="1" height="1" fill="#fff"/>
<rect x="270" y="66" width="1" height="1" fill="#fff"/>
<rect x="276" y="66" width="1" height="1" fill="#fff"/>
<rect x="282" y="66" width="1" height="1" fill="#fff"/>
<rect x="288" y="66" width="1" height="1" fill="#fff"/>
<rect x="294" y="66" width="1" height="1" fill="#fff"/>
<rect x="300" y="66" width="1" height="1" fill="#fff"/>
<rect x="306" y="66" width="1" height="1" fill="#fff"/>
<rect x="312" y="66" width="1" height="1" fill="#fff"/>
<rect x="318" y="66" width="1" height="1" fill="#fff"/>
<rect x="324" y="66" width="1" height="1" fill="#fff"/>
<rect x="330" y="66" width="1" height="1" fill="#fff"/>
<rect x="336" y="66" width="1" height="1" fill="#fff"/>
<rect x="342" y="66" width="1" height="1" fill="#fff"/>
<rect x="348" y="66" width="1" height="1" fill="#fff"/>
<rect x="354" y="66" width="1" height="1" fill="#fff"/>
<rect x="360" y="66" width="1" height="1" fill="#fff"/>
<rect x="366" y="66" width="1" height="1" fill="#fff"/>
<rect x="372" y="66" width="1" height="1" fill="#fff"/>
<rect x="378" y="66" width="1" height="1" fill="#fff"/>
<rect x="384" y="66" width="1" height="1" fill="#fff"/>
<rect x="390" y="66" width="1" height="1" fill="#fff"/>
<rect x="396" y="66" width="1" height="1" fill="#fff"/>
<rect x="402" y="66" width="1" height="1" fill="#fff"/>
<rect x="408" y="66" width="1" height="1" fill="#fff"/>
<rect x="414" y="66" width="1" height="1" fill="#fff"/>
<rect x="420" y="66" width="1" height="1" fill="#fff"/>
<rect x="426" y="66" width="1" height="1" fill="#fff"/>
<rect x="432" y="66" width="1" height="1" fill="#fff"/>
<rect x="438" y="66" width="1" height="1" fill="#fff"/>
<rect x="444" y="66" width="1" height="1" fill="#fff"/>
<rect x="450" y="66" width="1" height="1" fill="#fff"/>
<rect x="456" y="66" width="1" height="1" fill="#fff"/>
<rect x="462" y="66" width="1" height="1" fill="#fff"/>
<rect x="468" y="66" width="1" height="1" fill="#fff"/>
<rect x="474" y="66" width="1" height="1" fill="#fff"/>
<rect x="480" y="66" width="1" height="1" fill="#fff"/>
<rect x="486" y="66" width="1" height="1" fill="#fff"/>
<rect x="492" y="66" width="1" height="1" fill="#fff"/>
<rect x="498" y="66" width="1" height="1" fill="#fff"/>
<rect x="504" y="66" width="1" height="1" fill="#fff"/>
<rect x="510" y="66" width="1" height="1" fill="#fff"/>
<rect x="516" y="66" width="1" height="1" fill="#fff"/>
<rect x="522" y="66" width="1" height="1" fill="#fff"/>
<rect x="528" y="66" width="1" height="1" fill="#fff"/>
<rect x="534" y="66" width="1" height="1" fill="#fff"/>
<rect x="540" y="66" width="1" height="1" fill="#fff"/>
<rect x="546" y="66" width="1" height="1" fill="#fff"/>
<rect x="552" y="66" width="1" height="1" fill="#fff"/>
<rect x="558" y="66" width="1" height="1" fill="#fff"/>
<rect x="564" y="66" width="1" height="1" fill="#fff"/>
<rect x="570" y="66" width="1" height="1" fill="#fff"/>
<rect x="576" y="66" width="1" height="1" fill="#fff"/>
<rect x="582" y="66" width="1" height="1" fill="#fff"/>
<rect x="588" y="66" width="1" height="1" fill="#fff"/>
<rect x="594" y="66" width="1" height="1" fill="#fff"/>
<rect x="600" y="66" width="1" height="1" fill="#fff"/>
<rect x="606" y="66" width="1" height="1" fill="#fff"/>
<rect x="612" y="66" width="1" height="1" fill="#fff"/>
<rect x="618" y="66" width="1" height="1" fill="#fff"/>
<rect x="624" y="66" width="1" height="1" fill="#fff"/>
<rect x="630" y="66" width="1" height="1" fill="#fff"/>
<rect x="636" y="66" width="1" height="1" fill="#fff"/>
<rect x="642" y="66" width="1" height="1" fill="#fff"/>
<rect x="648" y="66" width="1" height="1" fill="#fff"/>
<rect x="654" y="66" width="1" height="1" fill="#fff"/>
<rect x="660" y="66" width="1" height="1" fill="#fff"/>
<rect x="666" y="66" width="1" height="1" fill="#fff"/>
<rect x="114" y="427" width="1" height="1" fill="#fff"/>
<rect x="120" y="427" width="1" height="1" fill="#fff"/>
<rect x="126" y="427" width="1" height="1" fill="#fff"/>
<rect x="132" y="427" width="1" height="1" fill="#fff"/>
<rect x="138" y="427" width="1" height="1" fill="#fff"/>
<rect x="144" y="427" width="1" height="1" fill="#fff"/>
<rect x="150" y="427" width="1" height="1" fill="#fff"/>
<rect x="156" y="427" width="1" height="1" fill="#fff"/>
<rect x="162" y="427" width="1" height="1" fill="#fff"/>
<rect x="168" y="427" width="1" height="1" fill="#fff"/>
<rect x="174" y="427" width="1" height="1" fill="#fff"/>
<rect x="180" y="427" width="1" height="1" fill="#fff"/>
<rect x="186" y="427" width="1" height="1" fill="#fff"/>
<rect x="192" y="427" width="1" height="1" fill="#fff"/>
<rect x="198" y="427" width="1" height="1" fill="#fff"/>
<rect x="204" y="427" width="1" height="1" fill="#fff"/>
<rect x="210" y="427" width="1" height="1" fill="#fff"/>
<rect x="216" y="427" width="1" height="1" fill="#fff"/>
<rect x="222" y="427" width="1" height="1" fill="#fff"/>
<rect x="228" y="427" width="1" height="1" fill="#fff"/>
<rect x="234" y="427" width="1" height="1" fill="#fff"/>
<rect x="240" y="427" width="1" height="1" fill="#fff"/>
<rect x="246" y="427" width="1" height="1" fill="#fff"/>
<rect x="252" y="427" width="1" height="1" fill="#fff"/>
<rect x="258" y="427" width="1" height="1" fill="#fff"/>
<rect x="264" y="427" width="1" height="1" fill="#fff"/>
<rect x="270" y="427" width="1" height="1" fill="#fff"/>
<rect x="276" y="427" width="1" height="1" fill="#fff"/>
<rect x="282" y="427" width="1" height="1" fill="#fff"/>
<rect x="288" y="427" width="1" height="1" fill="#fff"/>
<rect x="294" y="427" width="1" height="1" fill="#fff"/>
<rect x="300" y="427" width="1" height="1" fill="#fff"/>
<rect x="306" y="427" width="1" height="1" fill="#fff"/>
<rect x="312" y="427" width="1" height="1" fill="#fff"/>
<rect x="318" y="427" width="1" height="1" fill="#fff"/>
<rect x="324" y="427" width="1" height="1" fill="#fff"/>
<rect x="330" y="427" width="1" height="1" fill="#fff"/>
<rect x="336" y="427" width="1" height="1" fill="#fff"/>
<rect x="342" y="427" width="1" height="1" fill="#fff"/>
<rect x="348" y="427" width="1" height="1" fill="#fff"/>
<rect x="354" y="427" width="1" height="1" fill="#fff"/>
<rect x="360" y="427" width="1" height="1" fill="#fff"/>
<rect x="366" y="427" width="1" height="1" fill="#fff"/>
<rect x="372" y="427" width="1" height="1" fill="#fff"/>
<rect x="378" y="427" width="1" height="1" fill="#fff"/>
<rect x="384" y="427" width="1" height="1" fill="#fff"/>
<rect x="390" y="427" width="1" height="1" fill="#fff"/>
<rect x="396" y="427" width="1" height="1" fill="#fff"/>
<rect x="402" y="427" width="1" height="1" fill="#fff"/>
<rect x="408" y="427" width="1" height="1" fill="#fff"/>
<rect x="414" y="427" width="1" height="1" fill="#fff"/>
<rect x="420" y="427" width="1" height="1" fill="#fff"/>
<rect x="426" y="427" width="1" height="1" fill="#fff"/>
<rect x="432" y="427" width="1" height="1" fill="#fff"/>
<rect x="438" y="427" width="1" height="1" fill="#fff"/>
<rect x="444" y="427" width="1" height="1" fill="#fff"/>
<rect x="450" y="427" width="1" height="1" fill="#fff"/>
<rect x="456" y="427" width="1" height="1" fill="#fff"/>
<rect x="462" y="427" width="1" height="1" fill="#fff"/>
<rect x="468" y="427" width="1" height="1" fill="#fff"/>
<rect x="474" y="427" width="1" height="1" fill="#fff"/>
<rect x="480" y="427" width="1" height="1" fill="#fff"/>
<rect x="486" y="427" width="1" height="1" fill="#fff"/>
<rect x="492" y="427" width="1" height="1" fill="#fff"/>
<rect x="498" y="427" width="1" height="1" fill="#fff"/>
<rect x="504" y="427" width="1" height="1" fill="#fff"/>
<rect x="510" y="427" width="1" height="1" fill="#fff"/>
<rect x="516" y="427" width="1" height="1" fill="#fff"/>
<rect x="522" y="427" width="1" height="1" fill="#fff"/>
<rect x="528" y="427" width="1" height="1" fill="#fff"/>
<rect x="534" y="427" width="1" height="1" fill="#fff"/>
<rect x="540" y="427" width="1" height="1" fill="#fff"/>
<rect x="546" y="427" width="1" height="1" fill="#fff"/>
<rect x="552" y="427" width="1" height="1" fill="#fff"/>
<rect x="558" y="427" width="1" height="1" fill="#fff"/>
<rect x="564" y="427" width="1" height="1" fill="#fff"/>
<rect x="570" y="427" width="1" height="1" fill="#fff"/>
<rect x="576" y="427" width="1" height="1" fill="#fff"/>
<rect x="582" y="427" width="1" height="1" fill="#fff"/>
<rect x="588" y="427" width="1" height="1" fill="#fff"/>
<rect x="594" y="427" width="1" height="1" fill="#fff"/>
<rect x="600" y="427" width="1" height="1" fill="#fff"/>
<rect x="606" y="427" width="1" height="1" fill="#fff"/>
<rect x="612" y="427" width="1" height="1" fill="#fff"/>
<rect x="618" y="427" width="1" height="1" fill="#fff"/>
<rect x="624" y="427" width="1" height="1" fill="#fff"/>
<rect x="630" y="427" width="1" height="1" fill="#fff"/>
<rect x="636" y="427" width="1" height="1" fill="#fff"/>
<rect x="642" y="427" width="1" height="1" fill="#fff"/>
<rect x="648" y="427" width="1" height="1" fill="#fff"/>
<rect x="654" y="427" width="1" height="1" fill="#fff"/>
<rect x="660" y="427" width="1" height="1" fill="#fff"/>
<rect x="666" y="427" width="1" height="1" fill="#fff"/>
<rect x="114" y="439" width="1" height="1" fill="#fff"/>
<rect x="120" y="439" width="1" height="1" fill="#fff"/>
<rect x="126" y="439" width="1" height="1" fill="#fff"/>
<rect x="132" y="439" width="1" height="1" fill="#fff"/>
<rect x="138" y="439" width="1" height="1" fill="#fff"/>
<rect x="144" y="439" width="1" height="1" fill="#fff"/>
<rect x="150" y="439" width="1" height="1" fill="#fff"/>
<rect x="156" y="439" width="1" height="1" fill="#fff"/>
<rect x="162" y="439" width="1" height="1" fill="#fff"/>
<rect x="168" y="439" width="1" height="1" fill="#fff"/>
<rect x="174" y="439" width="1" height="1" fill="#fff"/>
<rect x="180" y="439" width="1" height="1" fill="#fff"/>
<rect x="186" y="439" width="1" height="1" fill="#fff"/>
<rect x="192" y="439" width="1" height="1" fill="#fff"/>
<rect x="198" y="439" width="1" height="1" fill="#fff"/>
<rect x="204" y="439" width="1" height="1" fill="#fff"/>
<rect x="210" y="439" width="1" height="1" fill="#fff"/>
<rect x="216" y="439" width="1" height="1" fill="#fff"/>
<rect x="222" y="439" width="1" height="1" fill="#fff"/>
<rect x="228" y="439" width="1" height="1" fill="#fff"/>
<rect x="234" y="439" width="1" height="1" fill="#fff"/>
<rect x="240" y="439" width="1" height="1" fill="#fff"/>
<rect x="246" y="439" width="1" height="1" fill="#fff"/>
<rect x="252" y="439" width="1" height="1" fill="#fff"/>
<rect x="258" y="439" width="1" height="1" fill="#fff"/>
<rect x="264" y="439" width="1" height="1" fill="#fff"/>
<rect x="270" y="439" width="1" height="1" fill="#fff"/>
<rect x="276" y="439" width="1" height="1" fill="#fff"/>
<rect x="282" y="439" width="1" height="1" fill="#fff"/>
<rect x="288" y="439" width="1" height="1" fill="#fff"/>
<rect x="294" y="439" width="1" height="1" fill="#fff"/>
<rect x="300" y="439" width="1" height="1" fill="#fff"/>
<rect x="306" y="439" width="1" height="1" fill="#fff"/>
<rect x="312" y="439" width="1" height="1" fill="#fff"/>
<rect x="318" y="439" width="1" height="1" fill="#fff"/>
<rect x="324" y="439" width="1" height="1" fill="#fff"/>
<rect x="330" y="439" width="1" height="1" fill="#fff"/>
<rect x="336" y="439" width="1" height="1" fill="#fff"/>
<rect x="342" y="439" width="1" height="1" fill="#fff"/>
<rect x="348" y="439" width="1" height="1" fill="#fff"/>
<rect x="354" y="439" width="1" height="1" fill="#fff"/>
<rect x="360" y="439" width="1" height="1" fill="#fff"/>
<rect x="366" y="439" width="1" height="1" fill="#fff"/>
<rect x="372" y="439" width="1" height="1" fill="#fff"/>
<rect x="378" y="439" width="1" height="1" fill="#fff"/>
<rect x="384" y="439" width="1" height="1" fill="#fff"/>
<rect x="390" y="439" width="1" height="1" fill="#fff"/>
<rect x="396" y="439" width="1" height="1" fill="#fff"/>
<rect x="402" y="439" width="1" height="1" fill="#fff"/>
<rect x="408" y="439" width="1" height="1" fill="#fff"/>
<rect x="414" y="439" width="1" height="1" fill="#fff"/>
<rect x="420" y="439" width="1" height="1" fill="#fff"/>
<rect x="426" y="439" width="1" height="1" fill="#fff"/>
<rect x="432" y="439" width="1" height="1" fill="#fff"/>
<rect x="438" y="439" width="1" height="1" fill="#fff"/>
<rect x="444" y="439" width="1" height="1" fill="#fff"/>
<rect x="450" y="439" width="1" height="1" fill="#fff"/>
<rect x="456" y="439" width="1" height="1" fill="#fff"/>
<rect x="462" y="439" width="1" height="1" fill="#fff"/>
<rect x="468" y="439" width="1" height="1" fill="#fff"/>
<rect x="474" y="439" width="1" height="1" fill="#fff"/>
<rect x="480" y="439" width="1" height="1" fill="#fff"/>
<rect x="486" y="439" width="1" height="1" fill="#fff"/>
<rect x="492" y="439" width="1" height="1" fill="#fff"/>
<rect x="498" y="439" width="1" height="1" fill="#fff"/>
<rect x="504" y="439" width="1" height="1" fill="#fff"/>
<rect x="510" y="439" width="1" height="1" fill="#fff"/>
<rect x="516" y="439" width="1" height="1" fill="#fff"/>
<rect x="522" y="439" width="1" height="1" fill="#fff"/>
<rect x="528" y="439" width="1" height="1" fill="#fff"/>
<rect x="534" y="439" width="1" height="1" fill="#fff"/>
<rect x="540" y="439" width="1" height="1" fill="#fff"/>
<rect x="546" y="439" width="1" height="1" fill="#fff"/>
<rect x="552" y="439" width="1" height="1" fill="#fff"/>
<rect x="558" y="439" width="1" height="1" fill="#fff"/>
<rect x="564" y="439" width="1" height="1" fill="#fff"/>
<rect x="570" y="439" width="1" height="1" fill="#fff"/>
<rect x="576" y="439" width="1" height="1" fill="#fff"/>
<rect x="582" y="439" width="1" height="1" fill="#fff"/>
<rect x="588" y="439" width="1" height="1" fill="#fff"/>
<rect x="594" y="439" width="1" height="1" fill="#fff"/>
<rect x="600" y="439" width="1" height="1" fill="#fff"/>
<rect x="606" y="439" width="1" height="1" fill="#fff"/>
<rect x="612" y="439" width="1" height="1" fill="#fff"/>
<rect x="618" y="439" width="1" height="1" fill="#fff"/>
<rect x="624" y="439" width="1" height="1" fill="#fff"/>
<rect x="630" y="439" width="1" height="1" fill="#fff"/>
<rect x="636" y="439" width="1" height="1" fill="#fff"/>
<rect x="642" y="439" width="1" height="1" fill="#fff"/>
<rect x="648" y="439" width="1" height="1" fill="#fff"/>
<rect x="654" y="439" width="1" height="1" fill="#fff"/>
<rect x="660" y="439" width="1" height="1" fill="#fff"/>
<rect x="666" y="439" width="1" height="1" fill="#fff"/>
<rect x="114" y="472" width="1" height="1" fill="#fff"/>
<rect x="120" y="472" width="1" height="1" fill="#fff"/>
<rect x="126" y="472" width="1" height="1" fill="#fff"/>
<rect x="132" y="472" width="1" height="1" fill="#fff"/>
<rect x="138" y="472" width="1" height="1" fill="#fff"/>
<rect x="144" y="472" width="1" height="1" fill="#fff"/>
<rect x="150" y="472" width="1" height="1" fill="#fff"/>
<rect x="156" y="472" width="1" height="1" fill="#fff"/>
<rect x="162" y="472" width="1" height="1" fill="#fff"/>
<rect x="168" y="472" width="1" height="1" fill="#fff"/>
<rect x="174" y="472" width="1" height="1" fill="#fff"/>
<rect x="180" y="472" width="1" height="1" fill="#fff"/>
<rect x="186" y="472" width="1" height="1" fill="#fff"/>
<rect x="192" y="472" width="1" height="1" fill="#fff"/>
<rect x="198" y="472" width="1" height="1" fill="#fff"/>
<rect x="204" y="472" width="1" height="1" fill="#fff"/>
<rect x="210" y="472" width="1" height="1" fill="#fff"/>
<rect x="216" y="472" width="1" height="1" fill="#fff"/>
<rect x="222" y="472" width="1" height="1" fill="#fff"/>
<rect x="228" y="472" width="1" height="1" fill="#fff"/>
<rect x="234" y="472" width="1" height="1" fill="#fff"/>
<rect x="240" y="472" width="1" height="1" fill="#fff"/>
<rect x="246" y="472" width="1" height="1" fill="#fff"/>
<rect x="252" y="472" width="1" height="1" fill="#fff"/>
<rect x="258" y="472" width="1" height="1" fill="#fff"/>
<rect x="264" y="472" width="1" height="1" fill="#fff"/>
<rect x="270" y="472" width="1" height="1" fill="#fff"/>
<rect x="276" y="472" width="1" height="1" fill="#fff"/>
<rect x="282" y="472" width="1" height="1" fill="#fff"/>
<rect x="288" y="472" width="1" height="1" fill="#fff"/>
<rect x="294" y="472" width="1" height="1" fill="#fff"/>
<rect x="300" y="472" width="1" height="1" fill="#fff"/>
<rect x="306" y="472" width="1" height="1" fill="#fff"/>
<rect x="312" y="472" width="1" height="1" fill="#fff"/>
<rect x="318" y="472" width="1" height="1" fill="#fff"/>
<rect x="324" y="472" width="1" height="1" fill="#fff"/>
<rect x="330" y="472" width="1" height="1" fill="#fff"/>
<rect x="336" y="472" width="1" height="1" fill="#fff"/>
<rect x="342" y="472" width="1" height="1" fill="#fff"/>
<rect x="348" y="472" width="1" height="1" fill="#fff"/>
<rect x="354" y="472" width="1" height="1" fill="#fff"/>
<rect x="360" y="472" width="1" height="1" fill="#fff"/>
<rect x="366" y="472" width="1" height="1" fill="#fff"/>
<rect x="372" y="472" width="1" height="1" fill="#fff"/>
<rect x="378" y="472" width="1" height="1" fill="#fff"/>
<rect x="384" y="472" width="1" height="1" fill="#fff"/>
<rect x="390" y="472" width="1" height="1" fill="#fff"/>
<rect x="396" y="472" width="1" height="1" fill="#fff"/>
<rect x="402" y="472" width="1" height="1" fill="#fff"/>
<rect x="408" y="472" width="1" height="1" fill="#fff"/>
<rect x="414" y="472" width="1" height="1" fill="#fff"/>
<rect x="420" y="472" width="1" height="1" fill="#fff"/>
<rect x="426" y="472" width="1" height="1" fill="#fff"/>
<rect x="432" y="472" width="1" height="1" fill="#fff"/>
<rect x="438" y="472" width="1" height="1" fill="#fff"/>
<rect x="444" y="472" width="1" height="1" fill="#fff"/>
<rect x="450" y="472" width="1" height="1" fill="#fff"/>
<rect x="456" y="472" width="1" height="1" fill="#fff"/>
<rect x="462" y="472" width="1" height="1" fill="#fff"/>
<rect x="468" y="472" width="1" height="1" fill="#fff"/>
<rect x="474" y="472" width="1" height="1" fill="#fff"/>
<rect x="480" y="472" width="1" height="1" fill="#fff"/>
<rect x="486" y="472" width="1" height="1" fill="#fff"/>
<rect x="492" y="472" width="1" height="1" fill="#fff"/>
<rect x="498" y="472" width="1" height="1" fill="#fff"/>
<rect x="504" y="472" width="1" height="1" fill="#fff"/>
<rect x="510" y="472" width="1" height="1" fill="#fff"/>
<rect x="516" y="472" width="1" height="1" fill="#fff"/>
<rect x="522" y="472" width="1" height="1" fill="#fff"/>
<rect x="528" y="472" width="1" height="1" fill="#fff"/>
<rect x="534" y="472" width="1" height="1" fill="#fff"/>
<rect x="540" y="472" width="1" height="1" fill="#fff"/>
<rect x="546" y="472" width="1" height="1" fill="#fff"/>
<rect x="552" y="472" width="1" height="1" fill="#fff"/>
<rect x="558" y="472" width="1" height="1" fill="#fff"/>
<rect x="564" y="472" width="1" height="1" fill="#fff"/>
<rect x="570" y="472" width="1" height="1" fill="#fff"/>
<rect x="576" y="472" width="1" height="1" fill="#fff"/>
<rect x="582" y="472" width="1" height="1" fill="#fff"/>
<rect x="588" y="472" width="1" height="1" fill="#fff"/>
<rect x="594" y="472" width="1" height="1" fill="#fff"/>
<rect x="600" y="472" width="1" height="1" fill="#fff"/>
<rect x="606" y="472" width="1" height="1" fill="#fff"/>
<rect x="612" y="472" width="1" height="1" fill="#fff"/>
<rect x="618" y="472" width="1" height="1" fill="#fff"/>
<rect x="624" y="472" width="1" height="1" fill="#fff"/>
<rect x="630" y="472" width="1" height="1" fill="#fff"/>
<rect x="636" y="472" width="1" height="1" fill="#fff"/>
<rect x="642" y="472" width="1" height="1" fill="#fff"/>
<rect x="648" y="472" width="1" height="1" fill="#fff"/>
<rect x="654" y="472" width="1" height="1" fill="#fff"/>
<rect x="660" y="472" width="1" height="1" fill="#fff"/>
<rect x="666" y="472" width="1" height="1" fill="#fff"/>
<rect x="109" y="468" width="1" height="15" fill="#fff"/>
<rect x="110" y="468" width="1" height="15" fill="#fff"/>
<rect x="111" y="468" width="1" height="15" fill="#fff"/>
<rect x="112" y="468" width="1" height="15" fill="#fff"/>
<rect x="113" y="468" width="1" height="15" fill="#fff"/>
<rect x="114" y="468" width="1" height="15" fill="#fff"/>
<rect x="115" y="468" width="1" height="15" fill="#fff"/>
<rect x="116" y="468" width="1" height="15" fill="#fff"/>
<rect x="117" y="468" width="1" height="15" fill="#fff"/>
<rect x="118" y="468" width="1" height="15" fill="#fff"/>
<rect x="119" y="468" width="1" height="15" fill="#fff"/>
<rect x="120" y="468" width="1" height="15" fill="#fff"/>
<rect x="121" y="468" width="1" height="15" fill="#fff"/>
<rect x="122" y="466" width="1" height="17" fill="#fff"/>
<rect x="123" y="465" width="1" height="18" fill="#fff"/>
<rect x="124" y="466" width="1" height="17" fill="#fff"/>
<rect x="125" y="464" width="1" height="19" fill="#fff"/>
<rect x="126" y="460" width="1" height="23" fill="#fff"/>
<rect x="127" y="458" width="1" height="25" fill="#fff"/>
<rect x="128" y="458" width="1" height="25" fill="#fff"/>
<rect x="129" y="460" width="1" height="23" fill="#fff"/>
<rect x="130" y="463" width="1" height="20" fill="#fff"/>
<rect x="131" y="465" width="1" height="18" fill="#fff"/>
<rect x="132" y="466" width="1" height="17" fill="#fff"/>
<rect x="133" y="463" width="1" height="20" fill="#fff"/>
<rect x="134" y="460" width="1" height="23" fill="#fff"/>
<rect x="135" y="459" width="1" height="24" fill="#fff"/>
<rect x="136" y="459" width="1" height="24" fill="#fff"/>
<rect x="137" y="462" width="1" height="21" fill="#fff"/>
<rect x="138" y="464" width="1" height="19" fill="#fff"/>
<rect x="139" y="466" width="1" height="17" fill="#fff"/>
<rect x="140" y="467" width="1" height="16" fill="#fff"/>
<rect x="141" y="465" width="1" height="18" fill="#fff"/>
<rect x="142" y="460" width="1" height="23" fill="#fff"/>
<rect x="143" y="459" width="1" height="24" fill="#fff"/>
<rect x="144" y="460" width="1" height="23" fill="#fff"/>
<rect x="145" y="462" width="1" height="21" fill="#fff"/>
<rect x="146" y="465" width="1" height="18" fill="#fff"/>
<rect x="147" y="468" width="1" height="15" fill="#fff"/>
<rect x="148" y="468" width="1" height="15" fill="#fff"/>
<rect x="149" y="467" width="1" height="16" fill="#fff"/>
<rect x="150" y="466" width="1" height="17" fill="#fff"/>
<rect x="151" y="470" width="1" height="13" fill="#fff"/>
<rect x="152" y="471" width="1" height="12" fill="#fff"/>
<rect x="153" y="474" width="1" height="9" fill="#fff"/>
<rect x="154" y="470" width="1" height="13" fill="#fff"/>
<rect x="155" y="463" width="1" height="20" fill="#fff"/>
<rect x="156" y="457" width="1" height="26" fill="#fff"/>
<rect x="157" y="453" width="1" height="30" fill="#fff"/>
<rect x="158" y="455" width="1" height="28" fill="#fff"/>
<rect x="159" y="459" width="1" height="24" fill="#fff"/>
<rect x="160" y="462" width="1" height="21" fill="#fff"/>
<rect x="161" y="464" width="1" height="19" fill="#fff"/>
<rect x="162" y="466" width="1" height="17" fill="#fff"/>
<rect x="163" y="468" width="1" height="15" fill="#fff"/>
<rect x="164" y="470" width="1" height="13" fill="#fff"/>
<rect x="165" y="466" width="1" height="17" fill="#fff"/>
<rect x="166" y="460" width="1" height="23" fill="#fff"/>
<rect x="167" y="460" width="1" height="23" fill="#fff"/>
<rect x="168" y="463" width="1" height="20" fill="#fff"/>
<rect x="169" y="465" width="1" height="18" fill="#fff"/>
<rect x="170" y="467" width="1" height="16" fill="#fff"/>
<rect x="171" y="468" width="1" height="15" fill="#fff"/>
<rect x="172" y="470" width="1" height="13" fill="#fff"/>
<rect x="173" y="462" width="1" height="21" fill="#fff"/>
<rect x="174" y="461" width="1" height="22" fill="#fff"/>
<rect x="175" y="462" width="1" height="21" fill="#fff"/>
<rect x="176" y="465" width="1" height="18" fill="#fff"/>
<rect x="177" y="468" width="1" height="15" fill="#fff"/>
<rect x="178" y="470" width="1" height="13" fill="#fff"/>
<rect x="179" y="470" width="1" height="13" fill="#fff"/>
<rect x="180" y="471" width="1" height="12" fill="#fff"/>
<rect x="181" y="463" width="1" height="20" fill="#fff"/>
<rect x="182" y="462" width="1" height="21" fill="#fff"/>
<rect x="183" y="463" width="1" height="20" fill="#fff"/>
<rect x="184" y="466" width="1" height="17" fill="#fff"/>
<rect x="185" y="469" width="1" height="14" fill="#fff"/>
<rect x="186" y="471" width="1" height="12" fill="#fff"/>
<rect x="187" y="471" width="1" height="12" fill="#fff"/>
<rect x="188" y="468" width="1" height="15" fill="#fff"/>
<rect x="189" y="464" width="1" height="19" fill="#fff"/>
<rect x="190" y="463" width="1" height="20" fill="#fff"/>
<rect x="191" y="464" width="1" height="19" fill="#fff"/>
<rect x="192" y="467" width="1" height="16" fill="#fff"/>
<rect x="193" y="470" width="1" height="13" fill="#fff"/>
<rect x="194" y="472" width="1" height="11" fill="#fff"/>
<rect x="195" y="472" width="1" height="11" fill="#fff"/>
<rect x="196" y="471" width="1" height="12" fill="#fff"/>
<rect x="197" y="464" width="1" height="19" fill="#fff"/>
<rect x="198" y="464" width="1" height="19" fill="#fff"/>
<rect x="199" y="464" width="1" height="19" fill="#fff"/>
<rect x="200" y="466" width="1" height="17" fill="#fff"/>
<rect x="201" y="461" width="1" height="22" fill="#fff"/>
<rect x="202" y="455" width="1" height="28" fill="#fff"/>
<rect x="203" y="450" width="1" height="33" fill="#fff"/>
<rect x="204" y="447" width="1" height="36" fill="#fff"/>
<rect x="205" y="453" width="1" height="30" fill="#fff"/>
<rect x="206" y="459" width="1" height="24" fill="#fff"/>
<rect x="207" y="463" width="1" height="20" fill="#fff"/>
<rect x="208" y="466" width="1" height="17" fill="#fff"/>
<rect x="209" y="469" width="1" height="14" fill="#fff"/>
<rect x="210" y="471" width="1" height="12" fill="#fff"/>
<rect x="211" y="469" width="1" height="14" fill="#fff"/>
<rect x="212" y="465" width="1" height="18" fill="#fff"/>
<rect x="213" y="463" width="1" height="20" fill="#fff"/>
<rect x="214" y="464" width="1" height="19" fill="#fff"/>
<rect x="215" y="466" width="1" height="17" fill="#fff"/>
<rect x="216" y="469" width="1" height="14" fill="#fff"/>
<rect x="217" y="471" width="1" height="12" fill="#fff"/>
<rect x="218" y="472" width="1" height="11" fill="#fff"/>
<rect x="219" y="468" width="1" height="15" fill="#fff"/>
<rect x="220" y="465" width="1" height="18" fill="#fff"/>
<rect x="221" y="464" width="1" height="19" fill="#fff"/>
<rect x="222" y="465" width="1" height="18" fill="#fff"/>
<rect x="223" y="466" width="1" height="17" fill="#fff"/>
<rect x="224" y="470" width="1" height="13" fill="#fff"/>
<rect x="225" y="472" width="1" height="11" fill="#fff"/>
<rect x="226" y="472" width="1" height="11" fill="#fff"/>
<rect x="227" y="472" width="1" height="11" fill="#fff"/>
<rect x="228" y="464" width="1" height="19" fill="#fff"/>
<rect x="229" y="465" width="1" height="18" fill="#fff"/>
<rect x="230" y="466" width="1" height="17" fill="#fff"/>
<rect x="231" y="468" width="1" height="15" fill="#fff"/>
<rect x="232" y="470" width="1" height="13" fill="#fff"/>
<rect x="233" y="472" width="1" height="11" fill="#fff"/>
<rect x="234" y="473" width="1" height="10" fill="#fff"/>
<rect x="235" y="468" width="1" height="15" fill="#fff"/>
<rect x="236" y="466" width="1" height="17" fill="#fff"/>
<rect x="237" y="465" width="1" height="18" fill="#fff"/>
<rect x="238" y="467" width="1" height="16" fill="#fff"/>
<rect x="239" y="469" width="1" height="14" fill="#fff"/>
<rect x="240" y="472" width="1" height="11" fill="#fff"/>
<rect x="241" y="474" width="1" height="9" fill="#fff"/>
<rect x="242" y="473" width="1" height="10" fill="#fff"/>
<rect x="243" y="472" width="1" height="11" fill="#fff"/>
<rect x="244" y="472" width="1" height="11" fill="#fff"/>
<rect x="245" y="476" width="1" height="7" fill="#fff"/>
<rect x="246" y="475" width="1" height="8" fill="#fff"/>
<rect x="247" y="481" width="1" height="2" fill="#fff"/>
<rect x="248" y="474" width="1" height="9" fill="#fff"/>
<rect x="249" y="468" width="1" height="15" fill="#fff"/>
<rect x="250" y="462" width="1" height="21" fill="#fff"/>
<rect x="251" y="458" width="1" height="25" fill="#fff"/>
<rect x="252" y="462" width="1" height="21" fill="#fff"/>
<rect x="253" y="465" width="1" height="18" fill="#fff"/>
<rect x="254" y="468" width="1" height="15" fill="#fff"/>
<rect x="255" y="470" width="1" height="13" fill="#fff"/>
<rect x="256" y="472" width="1" height="11" fill="#fff"/>
<rect x="257" y="474" width="1" height="9" fill="#fff"/>
<rect x="258" y="473" width="1" height="10" fill="#fff"/>
<rect x="259" y="470" width="1" height="13" fill="#fff"/>
<rect x="260" y="466" width="1" height="17" fill="#fff"/>
<rect x="261" y="467" width="1" height="16" fill="#fff"/>
<rect x="262" y="469" width="1" height="14" fill="#fff"/>
<rect x="263" y="472" width="1" height="11" fill="#fff"/>
<rect x="264" y="474" width="1" height="9" fill="#fff"/>
<rect x="265" y="476" width="1" height="7" fill="#fff"/>
<rect x="266" y="480" width="1" height="3" fill="#fff"/>
<rect x="267" y="481" width="1" height="2" fill="#fff"/>
<rect x="268" y="478" width="1" height="5" fill="#fff"/>
<rect x="269" y="473" width="1" height="10" fill="#fff"/>
<rect x="270" y="472" width="1" height="11" fill="#fff"/>
<rect x="271" y="477" width="1" height="6" fill="#fff"/>
<rect x="272" y="480" width="1" height="3" fill="#fff"/>
<rect x="273" y="481" width="1" height="2" fill="#fff"/>
<rect x="274" y="481" width="1" height="2" fill="#fff"/>
<rect x="275" y="481" width="1" height="2" fill="#fff"/>
<rect x="276" y="478" width="1" height="5" fill="#fff"/>
<rect x="277" y="473" width="1" height="10" fill="#fff"/>
<rect x="278" y="474" width="1" height="9" fill="#fff"/>
<rect x="279" y="478" width="1" height="5" fill="#fff"/>
<rect x="280" y="480" width="1" height="3" fill="#fff"/>
<rect x="281" y="481" width="1" height="2" fill="#fff"/>
<rect x="282" y="481" width="1" height="2" fill="#fff"/>
<rect x="283" y="479" width="1" height="4" fill="#fff"/>
<rect x="284" y="475" width="1" height="8" fill="#fff"/>
<rect x="285" y="474" width="1" height="9" fill="#fff"/>
<rect x="286" y="476" width="1" height="7" fill="#fff"/>
<rect x="287" y="480" width="1" height="3" fill="#fff"/>
<rect x="288" y="481" width="1" height="2" fill="#fff"/>
<rect x="289" y="480" width="1" height="3" fill="#fff"/>
<rect x="290" y="479" width="1" height="4" fill="#fff"/>
<rect x="291" y="477" width="1" height="6" fill="#fff"/>
<rect x="292" y="475" width="1" height="8" fill="#fff"/>
<rect x="293" y="472" width="1" height="11" fill="#fff"/>
<rect x="294" y="471" width="1" height="12" fill="#fff"/>
<rect x="295" y="467" width="1" height="16" fill="#fff"/>
<rect x="296" y="460" width="1" height="23" fill="#fff"/>
<rect x="297" y="454" width="1" height="29" fill="#fff"/>
<rect x="298" y="453" width="1" height="30" fill="#fff"/>
<rect x="299" y="455" width="1" height="28" fill="#fff"/>
<rect x="300" y="453" width="1" height="30" fill="#fff"/>
<rect x="301" y="453" width="1" height="30" fill="#fff"/>
<rect x="302" y="455" width="1" height="28" fill="#fff"/>
<rect x="303" y="457" width="1" height="26" fill="#fff"/>
<rect x="304" y="460" width="1" height="23" fill="#fff"/>
<rect x="305" y="463" width="1" height="20" fill="#fff"/>
<rect x="306" y="466" width="1" height="17" fill="#fff"/>
<rect x="307" y="467" width="1" height="16" fill="#fff"/>
<rect x="308" y="465" width="1" height="18" fill="#fff"/>
<rect x="309" y="462" width="1" height="21" fill="#fff"/>
<rect x="310" y="460" width="1" height="23" fill="#fff"/>
<rect x="311" y="460" width="1" height="23" fill="#fff"/>
<rect x="312" y="462" width="1" height="21" fill="#fff"/>
<rect x="313" y="465" width="1" height="18" fill="#fff"/>
<rect x="314" y="466" width="1" height="17" fill="#fff"/>
<rect x="315" y="472" width="1" height="11" fill="#fff"/>
<rect x="316" y="467" width="1" height="16" fill="#fff"/>
<rect x="317" y="466" width="1" height="17" fill="#fff"/>
<rect x="318" y="470" width="1" height="13" fill="#fff"/>
<rect x="319" y="473" width="1" height="10" fill="#fff"/>
<rect x="320" y="475" width="1" height="8" fill="#fff"/>
<rect x="321" y="478" width="1" height="5" fill="#fff"/>
<rect x="322" y="480" width="1" height="3" fill="#fff"/>
<rect x="323" y="481" width="1" height="2" fill="#fff"/>
<rect x="324" y="482" width="1" height="1" fill="#fff"/>
<rect x="325" y="482" width="1" height="1" fill="#fff"/>
<rect x="326" y="482" width="1" height="1" fill="#fff"/>
<rect x="327" y="482" width="1" height="1" fill="#fff"/>
<rect x="328" y="481" width="1" height="2" fill="#fff"/>
<rect x="329" y="481" width="1" height="2" fill="#fff"/>
<rect x="330" y="480" width="1" height="3" fill="#fff"/>
<rect x="331" y="477" width="1" height="6" fill="#fff"/>
<rect x="332" y="474" width="1" height="9" fill="#fff"/>
<rect x="333" y="476" width="1" height="7" fill="#fff"/>
<rect x="334" y="480" width="1" height="3" fill="#fff"/>
<rect x="335" y="482" width="1" height="1" fill="#fff"/>
<rect x="336" y="482" width="1" height="1" fill="#fff"/>
<rect x="337" y="481" width="1" height="2" fill="#fff"/>
<rect x="338" y="480" width="1" height="3" fill="#fff"/>
<rect x="339" y="476" width="1" height="7" fill="#fff"/>
<rect x="340" y="474" width="1" height="9" fill="#fff"/>
<rect x="341" y="473" width="1" height="10" fill="#fff"/>
<rect x="342" y="468" width="1" height="15" fill="#fff"/>
<rect x="343" y="463" width="1" height="20" fill="#fff"/>
<rect x="344" y="455" width="1" height="28" fill="#fff"/>
<rect x="345" y="452" width="1" height="31" fill="#fff"/>
<rect x="346" y="454" width="1" height="29" fill="#fff"/>
<rect x="347" y="454" width="1" height="29" fill="#fff"/>
<rect x="348" y="452" width="1" height="31" fill="#fff"/>
<rect x="349" y="454" width="1" height="29" fill="#fff"/>
<rect x="350" y="456" width="1" height="27" fill="#fff"/>
<rect x="351" y="460" width="1" height="23" fill="#fff"/>
<rect x="352" y="463" width="1" height="20" fill="#fff"/>
<rect x="353" y="466" width="1" height="17" fill="#fff"/>
<rect x="354" y="466" width="1" height="17" fill="#fff"/>
<rect x="355" y="464" width="1" height="19" fill="#fff"/>
<rect x="356" y="465" width="1" height="18" fill="#fff"/>
<rect x="357" y="468" width="1" height="15" fill="#fff"/>
<rect x="358" y="471" width="1" height="12" fill="#fff"/>
<rect x="359" y="473" width="1" height="10" fill="#fff"/>
<rect x="360" y="476" width="1" height="7" fill="#fff"/>
<rect x="361" y="479" width="1" height="4" fill="#fff"/>
<rect x="363" y="474" width="1" height="9" fill="#fff"/>
<rect x="364" y="473" width="1" height="10" fill="#fff"/>
<rect x="365" y="478" width="1" height="5" fill="#fff"/>
<rect x="366" y="480" width="1" height="3" fill="#fff"/>
<rect x="367" y="481" width="1" height="2" fill="#fff"/>
<rect x="368" y="482" width="1" height="1" fill="#fff"/>
<rect x="369" y="482" width="1" height="1" fill="#fff"/>
<rect x="370" y="480" width="1" height="3" fill="#fff"/>
<rect x="371" y="476" width="1" height="7" fill="#fff"/>
<rect x="372" y="474" width="1" height="9" fill="#fff"/>
<rect x="373" y="477" width="1" height="6" fill="#fff"/>
<rect x="374" y="480" width="1" height="3" fill="#fff"/>
<rect x="375" y="480" width="1" height="3" fill="#fff"/>
<rect x="376" y="481" width="1" height="2" fill="#fff"/>
<rect x="377" y="480" width="1" height="3" fill="#fff"/>
<rect x="378" y="476" width="1" height="7" fill="#fff"/>
<rect x="379" y="475" width="1" height="8" fill="#fff"/>
<rect x="380" y="478" width="1" height="5" fill="#fff"/>
<rect x="381" y="479" width="1" height="4" fill="#fff"/>
<rect x="382" y="481" width="1" height="2" fill="#fff"/>
<rect x="383" y="482" width="1" height="1" fill="#fff"/>
<rect x="384" y="481" width="1" height="2" fill="#fff"/>
<rect x="385" y="479" width="1" height="4" fill="#fff"/>
<rect x="386" y="474" width="1" height="9" fill="#fff"/>
<rect x="387" y="473" width="1" height="10" fill="#fff"/>
<rect x="388" y="471" width="1" height="12" fill="#fff"/>
<rect x="389" y="469" width="1" height="14" fill="#fff"/>
<rect x="390" y="463" width="1" height="20" fill="#fff"/>
<rect x="391" y="454" width="1" height="29" fill="#fff"/>
<rect x="392" y="452" width="1" height="31" fill="#fff"/>
<rect x="393" y="454" width="1" height="29" fill="#fff"/>
<rect x="394" y="452" width="1" height="31" fill="#fff"/>
<rect x="395" y="452" width="1" height="31" fill="#fff"/>
<rect x="396" y="455" width="1" height="28" fill="#fff"/>
<rect x="397" y="458" width="1" height="25" fill="#fff"/>
<rect x="398" y="460" width="1" height="23" fill="#fff"/>
<rect x="399" y="464" width="1" height="19" fill="#fff"/>
<rect x="400" y="465" width="1" height="18" fill="#fff"/>
<rect x="401" y="468" width="1" height="15" fill="#fff"/>
<rect x="402" y="467" width="1" height="16" fill="#fff"/>
<rect x="403" y="465" width="1" height="18" fill="#fff"/>
<rect x="404" y="468" width="1" height="15" fill="#fff"/>
<rect x="405" y="472" width="1" height="11" fill="#fff"/>
<rect x="406" y="473" width="1" height="10" fill="#fff"/>
<rect x="407" y="475" width="1" height="8" fill="#fff"/>
<rect x="408" y="478" width="1" height="5" fill="#fff"/>
<rect x="409" y="482" width="1" height="1" fill="#fff"/>
<rect x="410" y="473" width="1" height="10" fill="#fff"/>
<rect x="411" y="474" width="1" height="9" fill="#fff"/>
<rect x="412" y="478" width="1" height="5" fill="#fff"/>
<rect x="413" y="480" width="1" height="3" fill="#fff"/>
<rect x="414" y="481" width="1" height="2" fill="#fff"/>
<rect x="415" y="481" width="1" height="2" fill="#fff"/>
<rect x="416" y="481" width="1" height="2" fill="#fff"/>
<rect x="417" y="478" width="1" height="5" fill="#fff"/>
<rect x="418" y="473" width="1" height="10" fill="#fff"/>
<rect x="419" y="476" width="1" height="7" fill="#fff"/>
<rect x="420" y="479" width="1" height="4" fill="#fff"/>
<rect x="421" y="481" width="1" height="2" fill="#fff"/>
<rect x="422" y="482" width="1" height="1" fill="#fff"/>
<rect x="423" y="482" width="1" height="1" fill="#fff"/>
<rect x="424" y="481" width="1" height="2" fill="#fff"/>
<rect x="425" y="478" width="1" height="5" fill="#fff"/>
<rect x="426" y="472" width="1" height="11" fill="#fff"/>
<rect x="427" y="476" width="1" height="7" fill="#fff"/>
<rect x="428" y="479" width="1" height="4" fill="#fff"/>
<rect x="429" y="481" width="1" height="2" fill="#fff"/>
<rect x="430" y="482" width="1" height="1" fill="#fff"/>
<rect x="431" y="481" width="1" height="2" fill="#fff"/>
<rect x="432" y="479" width="1" height="4" fill="#fff"/>
<rect x="433" y="476" width="1" height="7" fill="#fff"/>
<rect x="434" y="474" width="1" height="9" fill="#fff"/>
<rect x="435" y="470" width="1" height="13" fill="#fff"/>
<rect x="436" y="465" width="1" height="18" fill="#fff"/>
<rect x="437" y="458" width="1" height="25" fill="#fff"/>
<rect x="438" y="453" width="1" height="30" fill="#fff"/>
<rect x="439" y="454" width="1" height="29" fill="#fff"/>
<rect x="440" y="454" width="1" height="29" fill="#fff"/>
<rect x="441" y="452" width="1" height="31" fill="#fff"/>
<rect x="442" y="451" width="1" height="32" fill="#fff"/>
<rect x="443" y="456" width="1" height="27" fill="#fff"/>
<rect x="444" y="459" width="1" height="24" fill="#fff"/>
<rect x="445" y="461" width="1" height="22" fill="#fff"/>
<rect x="446" y="464" width="1" height="19" fill="#fff"/>
<rect x="447" y="467" width="1" height="16" fill="#fff"/>
<rect x="448" y="467" width="1" height="16" fill="#fff"/>
<rect x="449" y="464" width="1" height="19" fill="#fff"/>
<rect x="450" y="465" width="1" height="18" fill="#fff"/>
<rect x="451" y="469" width="1" height="14" fill="#fff"/>
<rect x="452" y="472" width="1" height="11" fill="#fff"/>
<rect x="453" y="475" width="1" height="8" fill="#fff"/>
<rect x="454" y="478" width="1" height="5" fill="#fff"/>
<rect x="455" y="481" width="1" height="2" fill="#fff"/>
<rect x="457" y="473" width="1" height="10" fill="#fff"/>
<rect x="458" y="475" width="1" height="8" fill="#fff"/>
<rect x="459" y="479" width="1" height="4" fill="#fff"/>
<rect x="460" y="481" width="1" height="2" fill="#fff"/>
<rect x="461" y="481" width="1" height="2" fill="#fff"/>
<rect x="462" y="481" width="1" height="2" fill="#fff"/>
<rect x="463" y="480" width="1" height="3" fill="#fff"/>
<rect x="464" y="478" width="1" height="5" fill="#fff"/>
<rect x="465" y="474" width="1" height="9" fill="#fff"/>
<rect x="466" y="474" width="1" height="9" fill="#fff"/>
<rect x="467" y="477" width="1" height="6" fill="#fff"/>
<rect x="468" y="481" width="1" height="2" fill="#fff"/>
<rect x="471" y="481" width="1" height="2" fill="#fff"/>
<rect x="472" y="479" width="1" height="4" fill="#fff"/>
<rect x="473" y="474" width="1" height="9" fill="#fff"/>
<rect x="474" y="474" width="1" height="9" fill="#fff"/>
<rect x="475" y="477" width="1" height="6" fill="#fff"/>
<rect x="476" y="480" width="1" height="3" fill="#fff"/>
<rect x="477" y="482" width="1" height="1" fill="#fff"/>
<rect x="478" y="482" width="1" height="1" fill="#fff"/>
<rect x="479" y="479" width="1" height="4" fill="#fff"/>
<rect x="480" y="475" width="1" height="8" fill="#fff"/>
<rect x="481" y="473" width="1" height="10" fill="#fff"/>
<rect x="482" y="473" width="1" height="10" fill="#fff"/>
<rect x="483" y="469" width="1" height="14" fill="#fff"/>
<rect x="484" y="463" width="1" height="20" fill="#fff"/>
<rect x="485" y="454" width="1" height="29" fill="#fff"/>
<rect x="486" y="453" width="1" height="30" fill="#fff"/>
<rect x="487" y="453" width="1" height="30" fill="#fff"/>
<rect x="488" y="454" width="1" height="29" fill="#fff"/>
<rect x="489" y="452" width="1" height="31" fill="#fff"/>
<rect x="490" y="455" width="1" height="28" fill="#fff"/>
<rect x="491" y="458" width="1" height="25" fill="#fff"/>
<rect x="492" y="460" width="1" height="23" fill="#fff"/>
<rect x="493" y="463" width="1" height="20" fill="#fff"/>
<rect x="494" y="466" width="1" height="17" fill="#fff"/>
<rect x="495" y="469" width="1" height="14" fill="#fff"/>
<rect x="496" y="463" width="1" height="20" fill="#fff"/>
<rect x="497" y="461" width="1" height="22" fill="#fff"/>
<rect x="498" y="460" width="1" height="23" fill="#fff"/>
<rect x="499" y="460" width="1" height="23" fill="#fff"/>
<rect x="500" y="465" width="1" height="18" fill="#fff"/>
<rect x="501" y="469" width="1" height="14" fill="#fff"/>
<rect x="502" y="471" width="1" height="12" fill="#fff"/>
<rect x="503" y="470" width="1" height="13" fill="#fff"/>
<rect x="504" y="467" width="1" height="16" fill="#fff"/>
<rect x="505" y="469" width="1" height="14" fill="#fff"/>
<rect x="506" y="473" width="1" height="10" fill="#fff"/>
<rect x="507" y="475" width="1" height="8" fill="#fff"/>
<rect x="508" y="478" width="1" height="5" fill="#fff"/>
<rect x="509" y="480" width="1" height="3" fill="#fff"/>
<rect x="510" y="482" width="1" height="1" fill="#fff"/>
<rect x="512" y="482" width="1" height="1" fill="#fff"/>
<rect x="513" y="480" width="1" height="3" fill="#fff"/>
<rect x="514" y="482" width="1" height="1" fill="#fff"/>
<rect x="517" y="481" width="1" height="2" fill="#fff"/>
<rect x="518" y="479" width="1" height="4" fill="#fff"/>
<rect x="519" y="477" width="1" height="6" fill="#fff"/>
<rect x="520" y="473" width="1" height="10" fill="#fff"/>
<rect x="521" y="474" width="1" height="9" fill="#fff"/>
<rect x="522" y="480" width="1" height="3" fill="#fff"/>
<rect x="108" y="483" width="564" height="1" fill="#fff"/>
<rect x="267" y="483" width="4" height="1" fill="#ff0000"/>
<rect x="273" y="483" width="5" height="1" fill="#ff0000"/>
<rect x="281" y="483" width="5" height="1" fill="#ff0000"/>
<rect x="289" y="483" width="5" height="1" fill="#ff0000"/>
<rect x="322" y="483" width="1" height="1" fill="#ff0000"/>
<rect x="326" y="483" width="7" height="1" fill="#ff0000"/>
<rect x="336" y="483" width="5" height="1" fill="#ff0000"/>
<rect x="362" y="483" width="1" height="1" fill="#ff0000"/>
<rect x="367" y="483" width="5" height="1" fill="#ff0000"/>
<rect x="375" y="483" width="5" height="1" fill="#ff0000"/>
<rect x="383" y="483" width="1" height="1" fill="#ff0000"/>
<rect x="385" y="483" width="3" height="1" fill="#ff0000"/>
<rect x="409" y="483" width="1" height="1" fill="#ff0000"/>
<rect x="414" y="483" width="5" height="1" fill="#ff0000"/>
<rect x="422" y="483" width="5" height="1" fill="#ff0000"/>
<rect x="430" y="483" width="1" height="1" fill="#ff0000"/>
<rect x="432" y="483" width="3" height="1" fill="#ff0000"/>
<rect x="455" y="483" width="2" height="1" fill="#ff0000"/>
<rect x="461" y="483" width="5" height="1" fill="#ff0000"/>
<rect x="469" y="483" width="4" height="1" fill="#ff0000"/>
<rect x="476" y="483" width="2" height="1" fill="#ff0000"/>
<rect x="479" y="483" width="2" height="1" fill="#ff0000"/>
<rect x="510" y="483" width="3" height="1" fill="#ff0000"/>
<rect x="515" y="483" width="2" height="1" fill="#ff0000"/>
<rect x="518" y="483" width="2" height="1" fill="#ff0000"/>
<rect x="522" y="483" width="149" height="1" fill="#ff0000"/>
<rect x="115" y="474" width="1" height="9" fill="#fff"/>
<rect x="154" y="479" width="1" height="4" fill="#fff"/>
<rect x="193" y="479" width="1" height="4" fill="#fff"/>
<rect x="232" y="479" width="1" height="4" fill="#fff"/>
<rect x="271" y="474" width="1" height="9" fill="#fff"/>
<rect x="310" y="479" width="1" height="4" fill="#fff"/>
<rect x="349" y="479" width="1" height="4" fill="#fff"/>
<rect x="388" y="479" width="1" height="4" fill="#fff"/>
<rect x="427" y="474" width="1" height="9" fill="#fff"/>
<rect x="467" y="479" width="1" height="4" fill="#fff"/>
<rect x="506" y="479" width="1" height="4" fill="#fff"/>
<rect x="545" y="479" width="1" height="4" fill="#fff"/>
<rect x="584" y="474" width="1" height="9" fill="#fff"/>
<rect x="623" y="479" width="1" height="4" fill="#fff"/>
<rect x="662" y="479" width="1" height="4" fill="#fff"/>
<path d="M99.72 8.17L99.72 7.83L100.10 7.17L100.48 6.83L101.25 6.50L102.80 6.50L103.56 6.83L103.95 7.17L104.33 7.83L104.33 8.50L103.95 9.17L103.18 10.17L99.33 13.50L104.72 13.50M109.34 6.50L108.19 6.83L107.41 7.83L107.03 9.50L107.03 10.50L107.41 12.17L108.19 13.17L109.34 13.50L110.11 13.50L111.27 13.17L112.03 12.17L112.42 10.50L112.42 9.50L112.03 7.83L111.27 6.83L110.11 6.50L109.34 6.50M115.11 9.17L115.88 9.17L115.88 8.83L115.11 8.83L115.11 9.17M115.11 13.50L115.88 13.50L115.88 13.17L115.11 13.17L115.11 13.50M120.89 6.50L119.73 6.83L118.97 7.83L118.58 9.50L118.58 10.50L118.97 12.17L119.73 13.17L120.89 13.50L121.66 13.50L122.81 13.17L123.58 12.17L123.97 10.50L123.97 9.50L123.58 7.83L122.81 6.83L121.66 6.50L120.89 6.50M128.59 6.50L127.44 6.83L126.66 7.83L126.28 9.50L126.28 10.50L126.66 12.17L127.44 13.17L128.59 13.50L129.36 13.50L130.51 13.17L131.28 12.17L131.67 10.50L131.67 9.50L131.28 7.83L130.51 6.83L129.36 6.50L128.59 6.50" stroke="#fff" fill="none" stroke-width="1" stroke-linecap="square"/>
<path d="M99.72 496.17L99.72 495.83L100.10 495.17L100.48 494.83L101.25 494.50L102.80 494.50L103.56 494.83L103.95 495.17L104.33 495.83L104.33 496.50L103.95 497.17L103.18 498.17L99.33 501.50L104.72 501.50M109.34 494.50L108.19 494.83L107.41 495.83L107.03 497.50L107.03 498.50L107.41 500.17L108.19 501.17L109.34 501.50L110.11 501.50L111.27 501.17L112.03 500.17L112.42 498.50L112.42 497.50L112.03 495.83L111.27 494.83L110.11 494.50L109.34 494.50M115.11 497.17L115.88 497.17L115.88 496.83L115.11 496.83L115.11 497.17M115.11 501.50L115.88 501.50L115.88 501.17L115.11 501.17L115.11 501.50M120.89 494.50L119.73 494.83L118.97 495.83L118.58 497.50L118.58 498.50L118.97 500.17L119.73 501.17L120.89 501.50L121.66 501.50L122.81 501.17L123.58 500.17L123.97 498.50L123.97 497.50L123.58 495.83L122.81 494.83L121.66 494.50L120.89 494.50M128.59 494.50L127.44 494.83L126.66 495.83L126.28 497.50L126.28 498.50L126.66 500.17L127.44 501.17L128.59 501.50L129.36 501.50L130.51 501.17L131.28 500.17L131.67 498.50L131.67 497.50L131.28 495.83L130.51 494.83L129.36 494.50L128.59 494.50" stroke="#fff" fill="none" stroke-width="1" stroke-linecap="square"/>
<path d="M256.49 7.83L257.25 7.50L258.41 6.50L258.41 13.50M268.04 7.50L267.65 6.83L266.50 6.50L265.73 6.50L264.57 6.83L263.80 7.83L263.42 9.50L263.42 11.17L263.80 12.50L264.57 13.17L265.73 13.50L266.11 13.50L267.26 13.17L268.04 12.50L268.42 11.50L268.42 11.17L268.04 10.17L267.26 9.50L266.11 9.17L265.73 9.17L264.57 9.50L263.80 10.17L263.42 11.17M271.12 9.17L271.88 9.17L271.88 8.83L271.12 8.83L271.12 9.17M271.12 13.50L271.88 13.50L271.88 13.17L271.12 13.17L271.12 13.50M276.89 6.50L275.74 6.83L274.97 7.83L274.58 9.50L274.58 10.50L274.97 12.17L275.74 13.17L276.89 13.50L277.66 13.50L278.81 13.17L279.59 12.17L279.97 10.50L279.97 9.50L279.59 7.83L278.81 6.83L277.66 6.50L276.89 6.50M284.59 6.50L283.44 6.83L282.67 7.83L282.28 9.50L282.28 10.50L282.67 12.17L283.44 13.17L284.59 13.50L285.36 13.50L286.51 13.17L287.29 12.17L287.67 10.50L287.67 9.50L287.29 7.83L286.51 6.83L285.36 6.50L284.59 6.50" stroke="#fff" fill="none" stroke-width="1" stroke-linecap="square"/>
<path d="M256.49 495.83L257.25 495.50L258.41 494.50L258.41 501.50M268.04 495.50L267.65 494.83L266.50 494.50L265.73 494.50L264.57 494.83L263.80 495.83L263.42 497.50L263.42 499.17L263.80 500.50L264.57 501.17L265.73 501.50L266.11 501.50L267.26 501.17L268.04 500.50L268.42 499.50L268.42 499.17L268.04 498.17L267.26 497.50L266.11 497.17L265.73 497.17L264.57 497.50L263.80 498.17L263.42 499.17M271.12 497.17L271.88 497.17L271.88 496.83L271.12 496.83L271.12 497.17M271.12 501.50L271.88 501.50L271.88 501.17L271.12 501.17L271.12 501.50M276.89 494.50L275.74 494.83L274.97 495.83L274.58 497.50L274.58 498.50L274.97 500.17L275.74 501.17L276.89 501.50L277.66 501.50L278.81 501.17L279.59 500.17L279.97 498.50L279.97 497.50L279.59 495.83L278.81 494.83L277.66 494.50L276.89 494.50M284.59 494.50L283.44 494.83L282.67 495.83L282.28 497.50L282.28 498.50L282.67 500.17L283.44 501.17L284.59 501.50L285.36 501.50L286.51 501.17L287.29 500.17L287.67 498.50L287.67 497.50L287.29 495.83L286.51 494.83L285.36 494.50L284.59 494.50" stroke="#fff" fill="none" stroke-width="1" stroke-linecap="square"/>
<path d="M412.49 7.83L413.25 7.50L414.41 6.50L414.41 13.50M419.42 8.17L419.42 7.83L419.80 7.17L420.19 6.83L420.96 6.50L422.50 6.50L423.26 6.83L423.65 7.17L424.04 7.83L424.04 8.50L423.65 9.17L422.88 10.17L419.03 13.50L424.42 13.50M427.12 9.17L427.88 9.17L427.88 8.83L427.12 8.83L427.12 9.17M427.12 13.50L427.88 13.50L427.88 13.17L427.12 13.17L427.12 13.50M432.89 6.50L431.74 6.83L430.97 7.83L430.58 9.50L430.58 10.50L430.97 12.17L431.74 13.17L432.89 13.50L433.66 13.50L434.81 13.17L435.59 12.17L435.97 10.50L435.97 9.50L435.59 7.83L434.81 6.83L433.66 6.50L432.89 6.50M440.59 6.50L439.44 6.83L438.67 7.83L438.28 9.50L438.28 10.50L438.67 12.17L439.44 13.17L440.59 13.50L441.36 13.50L442.51 13.17L443.29 12.17L443.67 10.50L443.67 9.50L443.29 7.83L442.51 6.83L441.36 6.50L440.59 6.50" stroke="#fff" fill="none" stroke-width="1" stroke-linecap="square"/>
<path d="M412.49 495.83L413.25 495.50L414.41 494.50L414.41 501.50M419.42 496.17L419.42 495.83L419.80 495.17L420.19 494.83L420.96 494.50L422.50 494.50L423.26 494.83L423.65 495.17L424.04 495.83L424.04 496.50L423.65 497.17L422.88 498.17L419.03 501.50L424.42 501.50M427.12 497.17L427.88 497.17L427.88 496.83L427.12 496.83L427.12 497.17M427.12 501.50L427.88 501.50L427.88 501.17L427.12 501.17L427.12 501.50M432.89 494.50L431.74 494.83L430.97 495.83L430.58 497.50L430.58 498.50L430.97 500.17L431.74 501.17L432.89 501.50L433.66 501.50L434.81 501.17L435.59 500.17L435.97 498.50L435.97 497.50L435.59 495.83L434.81 494.83L433.66 494.50L432.89 494.50M440.59 494.50L439.44 494.83L438.67 495.83L438.28 497.50L438.28 498.50L438.67 500.17L439.44 501.17L440.59 501.50L441.36 501.50L442.51 501.17L443.29 500.17L443.67 498.50L443.67 497.50L443.29 495.83L442.51 494.83L441.36 494.50L440.59 494.50" stroke="#fff" fill="none" stroke-width="1" stroke-linecap="square"/>
<path d="M570.64 6.50L569.48 6.83L568.71 7.83L568.33 9.50L568.33 10.50L568.71 12.17L569.48 13.17L570.64 13.50L571.41 13.50L572.56 13.17L573.33 12.17L573.72 10.50L573.72 9.50L573.33 7.83L572.56 6.83L571.41 6.50L570.64 6.50M577.95 6.50L576.80 6.83L576.41 7.50L576.41 8.17L576.80 8.83L577.57 9.17L579.11 9.50L580.26 9.83L581.03 10.50L581.42 11.17L581.42 12.17L581.03 12.83L580.65 13.17L579.50 13.50L577.95 13.50L576.80 13.17L576.41 12.83L576.03 12.17L576.03 11.17L576.41 10.50L577.18 9.83L578.34 9.50L579.88 9.17L580.65 8.83L581.03 8.17L581.03 7.50L580.65 6.83L579.50 6.50L577.95 6.50M584.12 9.17L584.88 9.17L584.88 8.83L584.12 8.83L584.12 9.17M584.12 13.50L584.88 13.50L584.88 13.17L584.12 13.17L584.12 13.50M589.89 6.50L588.73 6.83L587.96 7.83L587.58 9.50L587.58 10.50L587.96 12.17L588.73 13.17L589.89 13.50L590.66 13.50L591.81 13.17L592.58 12.17L592.97 10.50L592.97 9.50L592.58 7.83L591.81 6.83L590.66 6.50L589.89 6.50M597.59 6.50L596.43 6.83L595.66 7.83L595.28 9.50L595.28 10.50L595.66 12.17L596.43 13.17L597.59 13.50L598.36 13.50L599.51 13.17L600.28 12.17L600.67 10.50L600.67 9.50L600.28 7.83L599.51 6.83L598.36 6.50L597.59 6.50" stroke="#fff" fill="none" stroke-width="1" stroke-linecap="square"/>
<path d="M570.64 494.50L569.48 494.83L568.71 495.83L568.33 497.50L568.33 498.50L568.71 500.17L569.48 501.17L570.64 501.50L571.41 501.50L572.56 501.17L573.33 500.17L573.72 498.50L573.72 497.50L573.33 495.83L572.56 494.83L571.41 494.50L570.64 494.50M577.95 494.50L576.80 494.83L576.41 495.50L576.41 496.17L576.80 496.83L577.57 497.17L579.11 497.50L580.26 497.83L581.03 498.50L581.42 499.17L581.42 500.17L581.03 500.83L580.65 501.17L579.50 501.50L577.95 501.50L576.80 501.17L576.41 500.83L576.03 500.17L576.03 499.17L576.41 498.50L577.18 497.83L578.34 497.50L579.88 497.17L580.65 496.83L581.03 496.17L581.03 495.50L580.65 494.83L579.50 494.50L577.95 494.50M584.12 497.17L584.88 497.17L584.88 496.83L584.12 496.83L584.12 497.17M584.12 501.50L584.88 501.50L584.88 501.17L584.12 501.17L584.12 501.50M589.89 494.50L588.73 494.83L587.96 495.83L587.58 497.50L587.58 498.50L587.96 500.17L588.73 501.17L589.89 501.50L590.66 501.50L591.81 501.17L592.58 500.17L592.97 498.50L592.97 497.50L592.58 495.83L591.81 494.83L590.66 494.50L589.89 494.50M597.59 494.50L596.43 494.83L595.66 495.83L595.28 497.50L595.28 498.50L595.66 500.17L596.43 501.17L597.59 501.50L598.36 501.50L599.51 501.17L600.28 500.17L600.67 498.50L600.67 497.50L600.28 495.83L599.51 494.83L598.36 494.50L597.59 494.50" stroke="#fff" fill="none" stroke-width="1" stroke-linecap="square"/>
<path d="M21.17 53.50L21.17 61.50M18.50 53.50L23.84 53.50M25.74 53.50L25.74 61.50M25.74 53.50L28.79 61.50M31.84 53.50L28.79 61.50M31.84 53.50L31.84 61.50M45.95 54.64L45.18 53.88L44.04 53.50L42.51 53.50L41.37 53.88L40.61 54.64L40.61 55.40L40.99 56.17L41.37 56.55L42.13 56.93L44.42 57.69L45.18 58.07L45.56 58.45L45.95 59.21L45.95 60.36L45.18 61.12L44.04 61.50L42.51 61.50L41.37 61.12L40.61 60.36M48.61 53.50L48.61 59.21L49.00 60.36L49.76 61.12L50.90 61.50L51.66 61.50L52.81 61.12L53.57 60.36L53.95 59.21L53.95 53.50M57.00 53.50L57.00 61.50M57.00 53.50L60.43 53.50L61.57 53.88L61.96 54.26L62.34 55.02L62.34 55.79L61.96 56.55L61.57 56.93L60.43 57.31M57.00 57.31L60.43 57.31L61.57 57.69L61.96 58.07L62.34 58.83L62.34 59.98L61.96 60.74L61.57 61.12L60.43 61.50L57.00 61.50M65.00 53.50L65.00 61.50M65.00 53.50L68.05 61.50M71.10 53.50L68.05 61.50M71.10 53.50L71.10 61.50M76.06 53.50L75.30 53.88L74.53 54.64L74.15 55.40L73.77 56.55L73.77 58.45L74.15 59.60L74.53 60.36L75.30 61.12L76.06 61.50L77.58 61.50L78.35 61.12L79.11 60.36L79.49 59.60L79.87 58.45L79.87 56.55L79.49 55.40L79.11 54.64L78.35 53.88L77.58 53.50L76.06 53.50M82.54 53.50L82.54 61.50M82.54 53.50L85.21 53.50L86.35 53.88L87.11 54.64L87.50 55.40L87.88 56.55L87.88 58.45L87.50 59.60L87.11 60.36L86.35 61.12L85.21 61.50L82.54 61.50M90.54 53.50L90.54 61.50M90.54 53.50L95.50 53.50M90.54 57.31L93.59 57.31M90.54 61.50L95.50 61.50" stroke="#fff" fill="none" stroke-width="1" stroke-linecap="square"/>
<path d="M8.50 100.50L8.50 108.50M8.50 108.50L13.08 108.50M16.90 100.50L13.84 108.50M16.90 100.50L19.95 108.50M14.99 105.83L18.81 105.83M26.82 101.64L26.06 100.88L24.91 100.50L23.39 100.50L22.24 100.88L21.48 101.64L21.48 102.40L21.86 103.17L22.24 103.55L23.01 103.93L25.30 104.69L26.06 105.07L26.44 105.45L26.82 106.21L26.82 107.36L26.06 108.12L24.91 108.50L23.39 108.50L22.24 108.12L21.48 107.36M34.84 102.40L34.46 101.64L33.70 100.88L32.93 100.50L31.40 100.50L30.64 100.88L29.88 101.64L29.50 102.40L29.11 103.55L29.11 105.45L29.50 106.60L29.88 107.36L30.64 108.12L31.40 108.50L32.93 108.50L33.70 108.12L34.46 107.36L34.84 106.60M39.42 100.50L38.66 100.88L37.89 101.64L37.51 102.40L37.13 103.55L37.13 105.45L37.51 106.60L37.89 107.36L38.66 108.12L39.42 108.50L40.95 108.50L41.71 108.12L42.48 107.36L42.86 106.60L43.24 105.45L43.24 103.55L42.86 102.40L42.48 101.64L41.71 100.88L40.95 100.50L39.42 100.50M52.02 98.98L45.15 111.17M54.31 100.50L54.31 108.50M54.31 100.50L59.27 100.50M54.31 104.31L57.36 104.31M54.31 108.50L59.27 108.50M61.56 100.50L61.56 108.50M66.14 100.50L66.14 108.50M63.47 100.50L68.82 100.50M79.50 98.98L78.74 99.74L77.98 100.88L77.21 102.40L76.83 104.31L76.83 105.83L77.21 107.74L77.98 109.26L78.74 110.40L79.50 111.17M82.18 100.50L82.18 108.50M82.18 100.50L84.85 100.50L85.99 100.88L86.76 101.64L87.14 102.40L87.52 103.55L87.52 105.45L87.14 106.60L86.76 107.36L85.99 108.12L84.85 108.50L82.18 108.50M90.19 100.50L90.19 108.50M90.19 100.50L93.63 100.50L94.77 100.88L95.16 101.26L95.54 102.02L95.54 103.17L95.16 103.93L94.77 104.31L93.63 104.69L90.19 104.69M97.83 98.98L98.59 99.74L99.35 100.88L100.12 102.40L100.50 104.31L100.50 105.83L100.12 107.74L99.35 109.26L98.59 110.40L97.83 111.17" stroke="#fff" fill="none" stroke-width="1" stroke-linecap="square"/>
<path d="M51.84 134.50L51.06 134.88L50.28 135.64L49.89 136.40L49.50 137.55L49.50 139.45L49.89 140.60L50.28 141.36L51.06 142.12L51.84 142.50L53.40 142.50L54.18 142.12L54.96 141.36L55.35 140.60L55.74 139.45L55.74 137.55L55.35 136.40L54.96 135.64L54.18 134.88L53.40 134.50L51.84 134.50M63.54 135.64L62.76 134.88L61.59 134.50L60.03 134.50L58.86 134.88L58.08 135.64L58.08 136.40L58.47 137.17L58.86 137.55L59.64 137.93L61.98 138.69L62.76 139.07L63.15 139.45L63.54 140.21L63.54 141.36L62.76 142.12L61.59 142.50L60.03 142.50L58.86 142.12L58.08 141.36M63.93 142.50L71.73 142.50M72.90 134.50L77.19 134.50L74.85 137.55L76.02 137.55L76.80 137.93L77.19 138.31L77.58 139.45L77.58 140.21L77.19 141.36L76.41 142.12L75.24 142.50L74.07 142.50L72.90 142.12L72.51 141.74L72.12 140.98M82.26 134.50L81.09 134.88L80.31 136.02L79.92 137.93L79.92 139.07L80.31 140.98L81.09 142.12L82.26 142.50L83.04 142.50L84.21 142.12L84.99 140.98L85.38 139.07L85.38 137.93L84.99 136.02L84.21 134.88L83.04 134.50L82.26 134.50M92.79 137.17L92.40 138.31L91.62 139.07L90.45 139.45L90.06 139.45L88.89 139.07L88.11 138.31L87.72 137.17L87.72 136.79L88.11 135.64L88.89 134.88L90.06 134.50L90.45 134.50L91.62 134.88L92.40 135.64L92.79 137.17L92.79 139.07L92.40 140.98L91.62 142.12L90.45 142.50L89.67 142.50L88.50 142.12L88.11 141.36M95.91 136.40L95.91 136.02L96.30 135.26L96.69 134.88L97.47 134.50L99.03 134.50L99.81 134.88L100.20 135.26L100.59 136.02L100.59 136.79L100.20 137.55L99.42 138.69L95.52 142.50L100.98 142.50" stroke="#fff" fill="none" stroke-width="1" stroke-linecap="square"/>
<path d="M51.84 147.50L51.06 147.88L50.28 148.64L49.89 149.40L49.50 150.55L49.50 152.45L49.89 153.60L50.28 154.36L51.06 155.12L51.84 155.50L53.40 155.50L54.18 155.12L54.96 154.36L55.35 153.60L55.74 152.45L55.74 150.55L55.35 149.40L54.96 148.64L54.18 147.88L53.40 147.50L51.84 147.50M63.54 148.64L62.76 147.88L61.59 147.50L60.03 147.50L58.86 147.88L58.08 148.64L58.08 149.40L58.47 150.17L58.86 150.55L59.64 150.93L61.98 151.69L62.76 152.07L63.15 152.45L63.54 153.21L63.54 154.36L62.76 155.12L61.59 155.50L60.03 155.50L58.86 155.12L58.08 154.36M63.93 155.50L71.73 155.50M72.90 147.50L77.19 147.50L74.85 150.55L76.02 150.55L76.80 150.93L77.19 151.31L77.58 152.45L77.58 153.21L77.19 154.36L76.41 155.12L75.24 155.50L74.07 155.50L72.90 155.12L72.51 154.74L72.12 153.98M80.70 147.50L84.99 147.50L82.65 150.55L83.82 150.55L84.60 150.93L84.99 151.31L85.38 152.45L85.38 153.21L84.99 154.36L84.21 155.12L83.04 155.50L81.87 155.50L80.70 155.12L80.31 154.74L79.92 153.98M91.62 147.50L87.72 152.83L93.57 152.83M91.62 147.50L91.62 155.50M95.91 149.40L95.91 149.02L96.30 148.26L96.69 147.88L97.47 147.50L99.03 147.50L99.81 147.88L100.20 148.26L100.59 149.02L100.59 149.79L100.20 150.55L99.42 151.69L95.52 155.50L100.98 155.50" stroke="#fff" fill="none" stroke-width="1" stroke-linecap="square"/>
<path d="M51.84 160.50L51.06 160.88L50.28 161.64L49.89 162.40L49.50 163.55L49.50 165.45L49.89 166.60L50.28 167.36L51.06 168.12L51.84 168.50L53.40 168.50L54.18 168.12L54.96 167.36L55.35 166.60L55.74 165.45L55.74 163.55L55.35 162.40L54.96 161.64L54.18 160.88L53.40 160.50L51.84 160.50M63.54 161.64L62.76 160.88L61.59 160.50L60.03 160.50L58.86 160.88L58.08 161.64L58.08 162.40L58.47 163.17L58.86 163.55L59.64 163.93L61.98 164.69L62.76 165.07L63.15 165.45L63.54 166.21L63.54 167.36L62.76 168.12L61.59 168.50L60.03 168.50L58.86 168.12L58.08 167.36M63.93 168.50L71.73 168.50M72.90 160.50L77.19 160.50L74.85 163.55L76.02 163.55L76.80 163.93L77.19 164.31L77.58 165.45L77.58 166.21L77.19 167.36L76.41 168.12L75.24 168.50L74.07 168.50L72.90 168.12L72.51 167.74L72.12 166.98M80.70 160.50L84.99 160.50L82.65 163.55L83.82 163.55L84.60 163.93L84.99 164.31L85.38 165.45L85.38 166.21L84.99 167.36L84.21 168.12L83.04 168.50L81.87 168.50L80.70 168.12L80.31 167.74L79.92 166.98M92.79 161.64L92.40 160.88L91.23 160.50L90.45 160.50L89.28 160.88L88.50 162.02L88.11 163.93L88.11 165.83L88.50 167.36L89.28 168.12L90.45 168.50L90.84 168.50L92.01 168.12L92.79 167.36L93.18 166.21L93.18 165.83L92.79 164.69L92.01 163.93L90.84 163.55L90.45 163.55L89.28 163.93L88.50 164.69L88.11 165.83M96.69 162.02L97.47 161.64L98.64 160.50L98.64 168.50" stroke="#fff" fill="none" stroke-width="1" stroke-linecap="square"/>
<path d="M51.84 172.50L51.06 172.88L50.28 173.64L49.89 174.40L49.50 175.55L49.50 177.45L49.89 178.60L50.28 179.36L51.06 180.12L51.84 180.50L53.40 180.50L54.18 180.12L54.96 179.36L55.35 178.60L55.74 177.45L55.74 175.55L55.35 174.40L54.96 173.64L54.18 172.88L53.40 172.50L51.84 172.50M63.54 173.64L62.76 172.88L61.59 172.50L60.03 172.50L58.86 172.88L58.08 173.64L58.08 174.40L58.47 175.17L58.86 175.55L59.64 175.93L61.98 176.69L62.76 177.07L63.15 177.45L63.54 178.21L63.54 179.36L62.76 180.12L61.59 180.50L60.03 180.50L58.86 180.12L58.08 179.36M63.93 180.50L71.73 180.50M72.90 172.50L77.19 172.50L74.85 175.55L76.02 175.55L76.80 175.93L77.19 176.31L77.58 177.45L77.58 178.21L77.19 179.36L76.41 180.12L75.24 180.50L74.07 180.50L72.90 180.12L72.51 179.74L72.12 178.98M80.70 172.50L84.99 172.50L82.65 175.55L83.82 175.55L84.60 175.93L84.99 176.31L85.38 177.45L85.38 178.21L84.99 179.36L84.21 180.12L83.04 180.50L81.87 180.50L80.70 180.12L80.31 179.74L79.92 178.98M89.67 172.50L88.50 172.88L88.11 173.64L88.11 174.40L88.50 175.17L89.28 175.55L90.84 175.93L92.01 176.31L92.79 177.07L93.18 177.83L93.18 178.98L92.79 179.74L92.40 180.12L91.23 180.50L89.67 180.50L88.50 180.12L88.11 179.74L87.72 178.98L87.72 177.83L88.11 177.07L88.89 176.31L90.06 175.93L91.62 175.55L92.40 175.17L92.79 174.40L92.79 173.64L92.40 172.88L91.23 172.50L89.67 172.50M100.98 172.50L97.08 180.50M95.52 172.50L100.98 172.50" stroke="#fff" fill="none" stroke-width="1" stroke-linecap="square"/>
<path d="M51.84 185.50L51.06 185.88L50.28 186.64L49.89 187.40L49.50 188.55L49.50 190.45L49.89 191.60L50.28 192.36L51.06 193.12L51.84 193.50L53.40 193.50L54.18 193.12L54.96 192.36L55.35 191.60L55.74 190.45L55.74 188.55L55.35 187.40L54.96 186.64L54.18 185.88L53.40 185.50L51.84 185.50M63.54 186.64L62.76 185.88L61.59 185.50L60.03 185.50L58.86 185.88L58.08 186.64L58.08 187.40L58.47 188.17L58.86 188.55L59.64 188.93L61.98 189.69L62.76 190.07L63.15 190.45L63.54 191.21L63.54 192.36L62.76 193.12L61.59 193.50L60.03 193.50L58.86 193.12L58.08 192.36M63.93 193.50L71.73 193.50M72.90 185.50L77.19 185.50L74.85 188.55L76.02 188.55L76.80 188.93L77.19 189.31L77.58 190.45L77.58 191.21L77.19 192.36L76.41 193.12L75.24 193.50L74.07 193.50L72.90 193.12L72.51 192.74L72.12 191.98M80.70 185.50L84.99 185.50L82.65 188.55L83.82 188.55L84.60 188.93L84.99 189.31L85.38 190.45L85.38 191.21L84.99 192.36L84.21 193.12L83.04 193.50L81.87 193.50L80.70 193.12L80.31 192.74L79.92 191.98M89.67 185.50L88.50 185.88L88.11 186.64L88.11 187.40L88.50 188.17L89.28 188.55L90.84 188.93L92.01 189.31L92.79 190.07L93.18 190.83L93.18 191.98L92.79 192.74L92.40 193.12L91.23 193.50L89.67 193.50L88.50 193.12L88.11 192.74L87.72 191.98L87.72 190.83L88.11 190.07L88.89 189.31L90.06 188.93L91.62 188.55L92.40 188.17L92.79 187.40L92.79 186.64L92.40 185.88L91.23 185.50L89.67 185.50M100.59 188.17L100.20 189.31L99.42 190.07L98.25 190.45L97.86 190.45L96.69 190.07L95.91 189.31L95.52 188.17L95.52 187.79L95.91 186.64L96.69 185.88L97.86 185.50L98.25 185.50L99.42 185.88L100.20 186.64L100.59 188.17L100.59 190.07L100.20 191.98L99.42 193.12L98.25 193.50L97.47 193.50L96.30 193.12L95.91 192.36" stroke="#fff" fill="none" stroke-width="1" stroke-linecap="square"/>
<path d="M51.84 198.50L51.06 198.88L50.28 199.64L49.89 200.40L49.50 201.55L49.50 203.45L49.89 204.60L50.28 205.36L51.06 206.12L51.84 206.50L53.40 206.50L54.18 206.12L54.96 205.36L55.35 204.60L55.74 203.45L55.74 201.55L55.35 200.40L54.96 199.64L54.18 198.88L53.40 198.50L51.84 198.50M63.54 199.64L62.76 198.88L61.59 198.50L60.03 198.50L58.86 198.88L58.08 199.64L58.08 200.40L58.47 201.17L58.86 201.55L59.64 201.93L61.98 202.69L62.76 203.07L63.15 203.45L63.54 204.21L63.54 205.36L62.76 206.12L61.59 206.50L60.03 206.50L58.86 206.12L58.08 205.36M63.93 206.50L71.73 206.50M72.90 198.50L77.19 198.50L74.85 201.55L76.02 201.55L76.80 201.93L77.19 202.31L77.58 203.45L77.58 204.21L77.19 205.36L76.41 206.12L75.24 206.50L74.07 206.50L72.90 206.12L72.51 205.74L72.12 204.98M83.82 198.50L79.92 203.83L85.77 203.83M83.82 198.50L83.82 206.50M90.06 198.50L88.89 198.88L88.11 200.02L87.72 201.93L87.72 203.07L88.11 204.98L88.89 206.12L90.06 206.50L90.84 206.50L92.01 206.12L92.79 204.98L93.18 203.07L93.18 201.93L92.79 200.02L92.01 198.88L90.84 198.50L90.06 198.50M100.20 198.50L96.30 198.50L95.91 201.93L96.30 201.55L97.47 201.17L98.64 201.17L99.81 201.55L100.59 202.31L100.98 203.45L100.98 204.21L100.59 205.36L99.81 206.12L98.64 206.50L97.47 206.50L96.30 206.12L95.91 205.74L95.52 204.98" stroke="#fff" fill="none" stroke-width="1" stroke-linecap="square"/>
<path d="M51.84 211.50L51.06 211.88L50.28 212.64L49.89 213.40L49.50 214.55L49.50 216.45L49.89 217.60L50.28 218.36L51.06 219.12L51.84 219.50L53.40 219.50L54.18 219.12L54.96 218.36L55.35 217.60L55.74 216.45L55.74 214.55L55.35 213.40L54.96 212.64L54.18 211.88L53.40 211.50L51.84 211.50M63.54 212.64L62.76 211.88L61.59 211.50L60.03 211.50L58.86 211.88L58.08 212.64L58.08 213.40L58.47 214.17L58.86 214.55L59.64 214.93L61.98 215.69L62.76 216.07L63.15 216.45L63.54 217.21L63.54 218.36L62.76 219.12L61.59 219.50L60.03 219.50L58.86 219.12L58.08 218.36M63.93 219.50L71.73 219.50M72.90 211.50L77.19 211.50L74.85 214.55L76.02 214.55L76.80 214.93L77.19 215.31L77.58 216.45L77.58 217.21L77.19 218.36L76.41 219.12L75.24 219.50L74.07 219.50L72.90 219.12L72.51 218.74L72.12 217.98M83.82 211.50L79.92 216.83L85.77 216.83M83.82 211.50L83.82 219.50M88.11 213.40L88.11 213.02L88.50 212.26L88.89 211.88L89.67 211.50L91.23 211.50L92.01 211.88L92.40 212.26L92.79 213.02L92.79 213.79L92.40 214.55L91.62 215.69L87.72 219.50L93.18 219.50M95.91 213.40L95.91 213.02L96.30 212.26L96.69 211.88L97.47 211.50L99.03 211.50L99.81 211.88L100.20 212.26L100.59 213.02L100.59 213.79L100.20 214.55L99.42 215.69L95.52 219.50L100.98 219.50" stroke="#fff" fill="none" stroke-width="1" stroke-linecap="square"/>
<path d="M51.84 223.50L51.06 223.88L50.28 224.64L49.89 225.40L49.50 226.55L49.50 228.45L49.89 229.60L50.28 230.36L51.06 231.12L51.84 231.50L53.40 231.50L54.18 231.12L54.96 230.36L55.35 229.60L55.74 228.45L55.74 226.55L55.35 225.40L54.96 224.64L54.18 223.88L53.40 223.50L51.84 223.50M63.54 224.64L62.76 223.88L61.59 223.50L60.03 223.50L58.86 223.88L58.08 224.64L58.08 225.40L58.47 226.17L58.86 226.55L59.64 226.93L61.98 227.69L62.76 228.07L63.15 228.45L63.54 229.21L63.54 230.36L62.76 231.12L61.59 231.50L60.03 231.50L58.86 231.12L58.08 230.36M63.93 231.50L71.73 231.50M72.90 223.50L77.19 223.50L74.85 226.55L76.02 226.55L76.80 226.93L77.19 227.31L77.58 228.45L77.58 229.21L77.19 230.36L76.41 231.12L75.24 231.50L74.07 231.50L72.90 231.12L72.51 230.74L72.12 229.98M84.60 223.50L80.70 223.50L80.31 226.93L80.70 226.55L81.87 226.17L83.04 226.17L84.21 226.55L84.99 227.31L85.38 228.45L85.38 229.21L84.99 230.36L84.21 231.12L83.04 231.50L81.87 231.50L80.70 231.12L80.31 230.74L79.92 229.98M88.50 223.50L92.79 223.50L90.45 226.55L91.62 226.55L92.40 226.93L92.79 227.31L93.18 228.45L93.18 229.21L92.79 230.36L92.01 231.12L90.84 231.50L89.67 231.50L88.50 231.12L88.11 230.74L87.72 229.98M95.91 225.40L95.91 225.02L96.30 224.26L96.69 223.88L97.47 223.50L99.03 223.50L99.81 223.88L100.20 224.26L100.59 225.02L100.59 225.79L100.20 226.55L99.42 227.69L95.52 231.50L100.98 231.50" stroke="#fff" fill="none" stroke-width="1" stroke-linecap="square"/>
<path d="M51.84 236.50L51.06 236.88L50.28 237.64L49.89 238.40L49.50 239.55L49.50 241.45L49.89 242.60L50.28 243.36L51.06 244.12L51.84 244.50L53.40 244.50L54.18 244.12L54.96 243.36L55.35 242.60L55.74 241.45L55.74 239.55L55.35 238.40L54.96 237.64L54.18 236.88L53.40 236.50L51.84 236.50M63.54 237.64L62.76 236.88L61.59 236.50L60.03 236.50L58.86 236.88L58.08 237.64L58.08 238.40L58.47 239.17L58.86 239.55L59.64 239.93L61.98 240.69L62.76 241.07L63.15 241.45L63.54 242.21L63.54 243.36L62.76 244.12L61.59 244.50L60.03 244.50L58.86 244.12L58.08 243.36M63.93 244.50L71.73 244.50M72.90 236.50L77.19 236.50L74.85 239.55L76.02 239.55L76.80 239.93L77.19 240.31L77.58 241.45L77.58 242.21L77.19 243.36L76.41 244.12L75.24 244.50L74.07 244.50L72.90 244.12L72.51 243.74L72.12 242.98M84.60 236.50L80.70 236.50L80.31 239.93L80.70 239.55L81.87 239.17L83.04 239.17L84.21 239.55L84.99 240.31L85.38 241.45L85.38 242.21L84.99 243.36L84.21 244.12L83.04 244.50L81.87 244.50L80.70 244.12L80.31 243.74L79.92 242.98M92.79 237.64L92.40 236.88L91.23 236.50L90.45 236.50L89.28 236.88L88.50 238.02L88.11 239.93L88.11 241.83L88.50 243.36L89.28 244.12L90.45 244.50L90.84 244.50L92.01 244.12L92.79 243.36L93.18 242.21L93.18 241.83L92.79 240.69L92.01 239.93L90.84 239.55L90.45 239.55L89.28 239.93L88.50 240.69L88.11 241.83M97.47 236.50L96.30 236.88L95.91 237.64L95.91 238.40L96.30 239.17L97.08 239.55L98.64 239.93L99.81 240.31L100.59 241.07L100.98 241.83L100.98 242.98L100.59 243.74L100.20 244.12L99.03 244.50L97.47 244.50L96.30 244.12L95.91 243.74L95.52 242.98L95.52 241.83L95.91 241.07L96.69 240.31L97.86 239.93L99.42 239.55L100.20 239.17L100.59 238.40L100.59 237.64L100.20 236.88L99.03 236.50L97.47 236.50" stroke="#fff" fill="none" stroke-width="1" stroke-linecap="square"/>
<path d="M51.84 249.50L51.06 249.88L50.28 250.64L49.89 251.40L49.50 252.55L49.50 254.45L49.89 255.60L50.28 256.36L51.06 257.12L51.84 257.50L53.40 257.50L54.18 257.12L54.96 256.36L55.35 255.60L55.74 254.45L55.74 252.55L55.35 251.40L54.96 250.64L54.18 249.88L53.40 249.50L51.84 249.50M63.54 250.64L62.76 249.88L61.59 249.50L60.03 249.50L58.86 249.88L58.08 250.64L58.08 251.40L58.47 252.17L58.86 252.55L59.64 252.93L61.98 253.69L62.76 254.07L63.15 254.45L63.54 255.21L63.54 256.36L62.76 257.12L61.59 257.50L60.03 257.50L58.86 257.12L58.08 256.36M63.93 257.50L71.73 257.50M72.90 249.50L77.19 249.50L74.85 252.55L76.02 252.55L76.80 252.93L77.19 253.31L77.58 254.45L77.58 255.21L77.19 256.36L76.41 257.12L75.24 257.50L74.07 257.50L72.90 257.12L72.51 256.74L72.12 255.98M84.60 249.50L80.70 249.50L80.31 252.93L80.70 252.55L81.87 252.17L83.04 252.17L84.21 252.55L84.99 253.31L85.38 254.45L85.38 255.21L84.99 256.36L84.21 257.12L83.04 257.50L81.87 257.50L80.70 257.12L80.31 256.74L79.92 255.98M93.18 249.50L89.28 257.50M87.72 249.50L93.18 249.50M97.86 249.50L96.69 249.88L95.91 251.02L95.52 252.93L95.52 254.07L95.91 255.98L96.69 257.12L97.86 257.50L98.64 257.50L99.81 257.12L100.59 255.98L100.98 254.07L100.98 252.93L100.59 251.02L99.81 249.88L98.64 249.50L97.86 249.50" stroke="#fff" fill="none" stroke-width="1" stroke-linecap="square"/>
<path d="M51.84 262.50L51.06 262.88L50.28 263.64L49.89 264.40L49.50 265.55L49.50 267.45L49.89 268.60L50.28 269.36L51.06 270.12L51.84 270.50L53.40 270.50L54.18 270.12L54.96 269.36L55.35 268.60L55.74 267.45L55.74 265.55L55.35 264.40L54.96 263.64L54.18 262.88L53.40 262.50L51.84 262.50M63.54 263.64L62.76 262.88L61.59 262.50L60.03 262.50L58.86 262.88L58.08 263.64L58.08 264.40L58.47 265.17L58.86 265.55L59.64 265.93L61.98 266.69L62.76 267.07L63.15 267.45L63.54 268.21L63.54 269.36L62.76 270.12L61.59 270.50L60.03 270.50L58.86 270.12L58.08 269.36M63.93 270.50L71.73 270.50M72.90 262.50L77.19 262.50L74.85 265.55L76.02 265.55L76.80 265.93L77.19 266.31L77.58 267.45L77.58 268.21L77.19 269.36L76.41 270.12L75.24 270.50L74.07 270.50L72.90 270.12L72.51 269.74L72.12 268.98M85.38 262.50L81.48 270.50M79.92 262.50L85.38 262.50M92.40 262.50L88.50 262.50L88.11 265.93L88.50 265.55L89.67 265.17L90.84 265.17L92.01 265.55L92.79 266.31L93.18 267.45L93.18 268.21L92.79 269.36L92.01 270.12L90.84 270.50L89.67 270.50L88.50 270.12L88.11 269.74L87.72 268.98M100.59 263.64L100.20 262.88L99.03 262.50L98.25 262.50L97.08 262.88L96.30 264.02L95.91 265.93L95.91 267.83L96.30 269.36L97.08 270.12L98.25 270.50L98.64 270.50L99.81 270.12L100.59 269.36L100.98 268.21L100.98 267.83L100.59 266.69L99.81 265.93L98.64 265.55L98.25 265.55L97.08 265.93L96.30 266.69L95.91 267.83" stroke="#fff" fill="none" stroke-width="1" stroke-linecap="square"/>
<path d="M51.84 275.50L51.06 275.88L50.28 276.64L49.89 277.40L49.50 278.55L49.50 280.45L49.89 281.60L50.28 282.36L51.06 283.12L51.84 283.50L53.40 283.50L54.18 283.12L54.96 282.36L55.35 281.60L55.74 280.45L55.74 278.55L55.35 277.40L54.96 276.64L54.18 275.88L53.40 275.50L51.84 275.50M63.54 276.64L62.76 275.88L61.59 275.50L60.03 275.50L58.86 275.88L58.08 276.64L58.08 277.40L58.47 278.17L58.86 278.55L59.64 278.93L61.98 279.69L62.76 280.07L63.15 280.45L63.54 281.21L63.54 282.36L62.76 283.12L61.59 283.50L60.03 283.50L58.86 283.12L58.08 282.36M63.93 283.50L71.73 283.50M72.90 275.50L77.19 275.50L74.85 278.55L76.02 278.55L76.80 278.93L77.19 279.31L77.58 280.45L77.58 281.21L77.19 282.36L76.41 283.12L75.24 283.50L74.07 283.50L72.90 283.12L72.51 282.74L72.12 281.98M85.38 275.50L81.48 283.50M79.92 275.50L85.38 275.50M92.40 275.50L88.50 275.50L88.11 278.93L88.50 278.55L89.67 278.17L90.84 278.17L92.01 278.55L92.79 279.31L93.18 280.45L93.18 281.21L92.79 282.36L92.01 283.12L90.84 283.50L89.67 283.50L88.50 283.12L88.11 282.74L87.72 281.98M97.47 275.50L96.30 275.88L95.91 276.64L95.91 277.40L96.30 278.17L97.08 278.55L98.64 278.93L99.81 279.31L100.59 280.07L100.98 280.83L100.98 281.98L100.59 282.74L100.20 283.12L99.03 283.50L97.47 283.50L96.30 283.12L95.91 282.74L95.52 281.98L95.52 280.83L95.91 280.07L96.69 279.31L97.86 278.93L99.42 278.55L100.20 278.17L100.59 277.40L100.59 276.64L100.20 275.88L99.03 275.50L97.47 275.50" stroke="#fff" fill="none" stroke-width="1" stroke-linecap="square"/>
<path d="M51.84 287.50L51.06 287.88L50.28 288.64L49.89 289.40L49.50 290.55L49.50 292.45L49.89 293.60L50.28 294.36L51.06 295.12L51.84 295.50L53.40 295.50L54.18 295.12L54.96 294.36L55.35 293.60L55.74 292.45L55.74 290.55L55.35 289.40L54.96 288.64L54.18 287.88L53.40 287.50L51.84 287.50M63.54 288.64L62.76 287.88L61.59 287.50L60.03 287.50L58.86 287.88L58.08 288.64L58.08 289.40L58.47 290.17L58.86 290.55L59.64 290.93L61.98 291.69L62.76 292.07L63.15 292.45L63.54 293.21L63.54 294.36L62.76 295.12L61.59 295.50L60.03 295.50L58.86 295.12L58.08 294.36M63.93 295.50L71.73 295.50M72.90 287.50L77.19 287.50L74.85 290.55L76.02 290.55L76.80 290.93L77.19 291.31L77.58 292.45L77.58 293.21L77.19 294.36L76.41 295.12L75.24 295.50L74.07 295.50L72.90 295.12L72.51 294.74L72.12 293.98M85.38 287.50L81.48 295.50M79.92 287.50L85.38 287.50M92.40 287.50L88.50 287.50L88.11 290.93L88.50 290.55L89.67 290.17L90.84 290.17L92.01 290.55L92.79 291.31L93.18 292.45L93.18 293.21L92.79 294.36L92.01 295.12L90.84 295.50L89.67 295.50L88.50 295.12L88.11 294.74L87.72 293.98M100.59 290.17L100.20 291.31L99.42 292.07L98.25 292.45L97.86 292.45L96.69 292.07L95.91 291.31L95.52 290.17L95.52 289.79L95.91 288.64L96.69 287.88L97.86 287.50L98.25 287.50L99.42 287.88L100.20 288.64L100.59 290.17L100.59 292.07L100.20 293.98L99.42 295.12L98.25 295.50L97.47 295.50L96.30 295.12L95.91 294.36" stroke="#fff" fill="none" stroke-width="1" stroke-linecap="square"/>
<path d="M51.84 300.50L51.06 300.88L50.28 301.64L49.89 302.40L49.50 303.55L49.50 305.45L49.89 306.60L50.28 307.36L51.06 308.12L51.84 308.50L53.40 308.50L54.18 308.12L54.96 307.36L55.35 306.60L55.74 305.45L55.74 303.55L55.35 302.40L54.96 301.64L54.18 300.88L53.40 300.50L51.84 300.50M63.54 301.64L62.76 300.88L61.59 300.50L60.03 300.50L58.86 300.88L58.08 301.64L58.08 302.40L58.47 303.17L58.86 303.55L59.64 303.93L61.98 304.69L62.76 305.07L63.15 305.45L63.54 306.21L63.54 307.36L62.76 308.12L61.59 308.50L60.03 308.50L58.86 308.12L58.08 307.36M63.93 308.50L71.73 308.50M72.90 300.50L77.19 300.50L74.85 303.55L76.02 303.55L76.80 303.93L77.19 304.31L77.58 305.45L77.58 306.21L77.19 307.36L76.41 308.12L75.24 308.50L74.07 308.50L72.90 308.12L72.51 307.74L72.12 306.98M85.38 300.50L81.48 308.50M79.92 300.50L85.38 300.50M92.79 301.64L92.40 300.88L91.23 300.50L90.45 300.50L89.28 300.88L88.50 302.02L88.11 303.93L88.11 305.83L88.50 307.36L89.28 308.12L90.45 308.50L90.84 308.50L92.01 308.12L92.79 307.36L93.18 306.21L93.18 305.83L92.79 304.69L92.01 303.93L90.84 303.55L90.45 303.55L89.28 303.93L88.50 304.69L88.11 305.83M97.86 300.50L96.69 300.88L95.91 302.02L95.52 303.93L95.52 305.07L95.91 306.98L96.69 308.12L97.86 308.50L98.64 308.50L99.81 308.12L100.59 306.98L100.98 305.07L100.98 303.93L100.59 302.02L99.81 300.88L98.64 300.50L97.86 300.50" stroke="#fff" fill="none" stroke-width="1" stroke-linecap="square"/>
<path d="M51.84 313.50L51.06 313.88L50.28 314.64L49.89 315.40L49.50 316.55L49.50 318.45L49.89 319.60L50.28 320.36L51.06 321.12L51.84 321.50L53.40 321.50L54.18 321.12L54.96 320.36L55.35 319.60L55.74 318.45L55.74 316.55L55.35 315.40L54.96 314.64L54.18 313.88L53.40 313.50L51.84 313.50M63.54 314.64L62.76 313.88L61.59 313.50L60.03 313.50L58.86 313.88L58.08 314.64L58.08 315.40L58.47 316.17L58.86 316.55L59.64 316.93L61.98 317.69L62.76 318.07L63.15 318.45L63.54 319.21L63.54 320.36L62.76 321.12L61.59 321.50L60.03 321.50L58.86 321.12L58.08 320.36M63.93 321.50L71.73 321.50M72.90 313.50L77.19 313.50L74.85 316.55L76.02 316.55L76.80 316.93L77.19 317.31L77.58 318.45L77.58 319.21L77.19 320.36L76.41 321.12L75.24 321.50L74.07 321.50L72.90 321.12L72.51 320.74L72.12 319.98M85.38 313.50L81.48 321.50M79.92 313.50L85.38 313.50M92.79 314.64L92.40 313.88L91.23 313.50L90.45 313.50L89.28 313.88L88.50 315.02L88.11 316.93L88.11 318.83L88.50 320.36L89.28 321.12L90.45 321.50L90.84 321.50L92.01 321.12L92.79 320.36L93.18 319.21L93.18 318.83L92.79 317.69L92.01 316.93L90.84 316.55L90.45 316.55L89.28 316.93L88.50 317.69L88.11 318.83M96.69 315.02L97.47 314.64L98.64 313.50L98.64 321.50" stroke="#fff" fill="none" stroke-width="1" stroke-linecap="square"/>
<path d="M51.84 326.50L51.06 326.88L50.28 327.64L49.89 328.40L49.50 329.55L49.50 331.45L49.89 332.60L50.28 333.36L51.06 334.12L51.84 334.50L53.40 334.50L54.18 334.12L54.96 333.36L55.35 332.60L55.74 331.45L55.74 329.55L55.35 328.40L54.96 327.64L54.18 326.88L53.40 326.50L51.84 326.50M63.54 327.64L62.76 326.88L61.59 326.50L60.03 326.50L58.86 326.88L58.08 327.64L58.08 328.40L58.47 329.17L58.86 329.55L59.64 329.93L61.98 330.69L62.76 331.07L63.15 331.45L63.54 332.21L63.54 333.36L62.76 334.12L61.59 334.50L60.03 334.50L58.86 334.12L58.08 333.36M63.93 334.50L71.73 334.50M72.90 326.50L77.19 326.50L74.85 329.55L76.02 329.55L76.80 329.93L77.19 330.31L77.58 331.45L77.58 332.21L77.19 333.36L76.41 334.12L75.24 334.50L74.07 334.50L72.90 334.12L72.51 333.74L72.12 332.98M85.38 326.50L81.48 334.50M79.92 326.50L85.38 326.50M92.79 327.64L92.40 326.88L91.23 326.50L90.45 326.50L89.28 326.88L88.50 328.02L88.11 329.93L88.11 331.83L88.50 333.36L89.28 334.12L90.45 334.50L90.84 334.50L92.01 334.12L92.79 333.36L93.18 332.21L93.18 331.83L92.79 330.69L92.01 329.93L90.84 329.55L90.45 329.55L89.28 329.93L88.50 330.69L88.11 331.83M96.30 326.50L100.59 326.50L98.25 329.55L99.42 329.55L100.20 329.93L100.59 330.31L100.98 331.45L100.98 332.21L100.59 333.36L99.81 334.12L98.64 334.50L97.47 334.50L96.30 334.12L95.91 333.74L95.52 332.98" stroke="#fff" fill="none" stroke-width="1" stroke-linecap="square"/>
<path d="M51.84 338.50L51.06 338.88L50.28 339.64L49.89 340.40L49.50 341.55L49.50 343.45L49.89 344.60L50.28 345.36L51.06 346.12L51.84 346.50L53.40 346.50L54.18 346.12L54.96 345.36L55.35 344.60L55.74 343.45L55.74 341.55L55.35 340.40L54.96 339.64L54.18 338.88L53.40 338.50L51.84 338.50M63.54 339.64L62.76 338.88L61.59 338.50L60.03 338.50L58.86 338.88L58.08 339.64L58.08 340.40L58.47 341.17L58.86 341.55L59.64 341.93L61.98 342.69L62.76 343.07L63.15 343.45L63.54 344.21L63.54 345.36L62.76 346.12L61.59 346.50L60.03 346.50L58.86 346.12L58.08 345.36M63.93 346.50L71.73 346.50M72.90 338.50L77.19 338.50L74.85 341.55L76.02 341.55L76.80 341.93L77.19 342.31L77.58 343.45L77.58 344.21L77.19 345.36L76.41 346.12L75.24 346.50L74.07 346.50L72.90 346.12L72.51 345.74L72.12 344.98M85.38 338.50L81.48 346.50M79.92 338.50L85.38 338.50M92.79 339.64L92.40 338.88L91.23 338.50L90.45 338.50L89.28 338.88L88.50 340.02L88.11 341.93L88.11 343.83L88.50 345.36L89.28 346.12L90.45 346.50L90.84 346.50L92.01 346.12L92.79 345.36L93.18 344.21L93.18 343.83L92.79 342.69L92.01 341.93L90.84 341.55L90.45 341.55L89.28 341.93L88.50 342.69L88.11 343.83M99.42 338.50L95.52 343.83L101.37 343.83M99.42 338.50L99.42 346.50" stroke="#fff" fill="none" stroke-width="1" stroke-linecap="square"/>
<path d="M51.84 351.50L51.06 351.88L50.28 352.64L49.89 353.40L49.50 354.55L49.50 356.45L49.89 357.60L50.28 358.36L51.06 359.12L51.84 359.50L53.40 359.50L54.18 359.12L54.96 358.36L55.35 357.60L55.74 356.45L55.74 354.55L55.35 353.40L54.96 352.64L54.18 351.88L53.40 351.50L51.84 351.50M63.54 352.64L62.76 351.88L61.59 351.50L60.03 351.50L58.86 351.88L58.08 352.64L58.08 353.40L58.47 354.17L58.86 354.55L59.64 354.93L61.98 355.69L62.76 356.07L63.15 356.45L63.54 357.21L63.54 358.36L62.76 359.12L61.59 359.50L60.03 359.50L58.86 359.12L58.08 358.36M63.93 359.50L71.73 359.50M72.90 351.50L77.19 351.50L74.85 354.55L76.02 354.55L76.80 354.93L77.19 355.31L77.58 356.45L77.58 357.21L77.19 358.36L76.41 359.12L75.24 359.50L74.07 359.50L72.90 359.12L72.51 358.74L72.12 357.98M85.38 351.50L81.48 359.50M79.92 351.50L85.38 351.50M92.79 352.64L92.40 351.88L91.23 351.50L90.45 351.50L89.28 351.88L88.50 353.02L88.11 354.93L88.11 356.83L88.50 358.36L89.28 359.12L90.45 359.50L90.84 359.50L92.01 359.12L92.79 358.36L93.18 357.21L93.18 356.83L92.79 355.69L92.01 354.93L90.84 354.55L90.45 354.55L89.28 354.93L88.50 355.69L88.11 356.83M100.20 351.50L96.30 351.50L95.91 354.93L96.30 354.55L97.47 354.17L98.64 354.17L99.81 354.55L100.59 355.31L100.98 356.45L100.98 357.21L100.59 358.36L99.81 359.12L98.64 359.50L97.47 359.50L96.30 359.12L95.91 358.74L95.52 357.98" stroke="#fff" fill="none" stroke-width="1" stroke-linecap="square"/>
<path d="M51.84 364.50L51.06 364.88L50.28 365.64L49.89 366.40L49.50 367.55L49.50 369.45L49.89 370.60L50.28 371.36L51.06 372.12L51.84 372.50L53.40 372.50L54.18 372.12L54.96 371.36L55.35 370.60L55.74 369.45L55.74 367.55L55.35 366.40L54.96 365.64L54.18 364.88L53.40 364.50L51.84 364.50M63.54 365.64L62.76 364.88L61.59 364.50L60.03 364.50L58.86 364.88L58.08 365.64L58.08 366.40L58.47 367.17L58.86 367.55L59.64 367.93L61.98 368.69L62.76 369.07L63.15 369.45L63.54 370.21L63.54 371.36L62.76 372.12L61.59 372.50L60.03 372.50L58.86 372.12L58.08 371.36M63.93 372.50L71.73 372.50M72.90 364.50L77.19 364.50L74.85 367.55L76.02 367.55L76.80 367.93L77.19 368.31L77.58 369.45L77.58 370.21L77.19 371.36L76.41 372.12L75.24 372.50L74.07 372.50L72.90 372.12L72.51 371.74L72.12 370.98M85.38 364.50L81.48 372.50M79.92 364.50L85.38 364.50M92.79 365.64L92.40 364.88L91.23 364.50L90.45 364.50L89.28 364.88L88.50 366.02L88.11 367.93L88.11 369.83L88.50 371.36L89.28 372.12L90.45 372.50L90.84 372.50L92.01 372.12L92.79 371.36L93.18 370.21L93.18 369.83L92.79 368.69L92.01 367.93L90.84 367.55L90.45 367.55L89.28 367.93L88.50 368.69L88.11 369.83M100.59 365.64L100.20 364.88L99.03 364.50L98.25 364.50L97.08 364.88L96.30 366.02L95.91 367.93L95.91 369.83L96.30 371.36L97.08 372.12L98.25 372.50L98.64 372.50L99.81 372.12L100.59 371.36L100.98 370.21L100.98 369.83L100.59 368.69L99.81 367.93L98.64 367.55L98.25 367.55L97.08 367.93L96.30 368.69L95.91 369.83" stroke="#fff" fill="none" stroke-width="1" stroke-linecap="square"/>
<path d="M51.84 377.50L51.06 377.88L50.28 378.64L49.89 379.40L49.50 380.55L49.50 382.45L49.89 383.60L50.28 384.36L51.06 385.12L51.84 385.50L53.40 385.50L54.18 385.12L54.96 384.36L55.35 383.60L55.74 382.45L55.74 380.55L55.35 379.40L54.96 378.64L54.18 377.88L53.40 377.50L51.84 377.50M63.54 378.64L62.76 377.88L61.59 377.50L60.03 377.50L58.86 377.88L58.08 378.64L58.08 379.40L58.47 380.17L58.86 380.55L59.64 380.93L61.98 381.69L62.76 382.07L63.15 382.45L63.54 383.21L63.54 384.36L62.76 385.12L61.59 385.50L60.03 385.50L58.86 385.12L58.08 384.36M63.93 385.50L71.73 385.50M72.90 377.50L77.19 377.50L74.85 380.55L76.02 380.55L76.80 380.93L77.19 381.31L77.58 382.45L77.58 383.21L77.19 384.36L76.41 385.12L75.24 385.50L74.07 385.50L72.90 385.12L72.51 384.74L72.12 383.98M81.87 377.50L80.70 377.88L80.31 378.64L80.31 379.40L80.70 380.17L81.48 380.55L83.04 380.93L84.21 381.31L84.99 382.07L85.38 382.83L85.38 383.98L84.99 384.74L84.60 385.12L83.43 385.50L81.87 385.50L80.70 385.12L80.31 384.74L79.92 383.98L79.92 382.83L80.31 382.07L81.09 381.31L82.26 380.93L83.82 380.55L84.60 380.17L84.99 379.40L84.99 378.64L84.60 377.88L83.43 377.50L81.87 377.50M88.89 379.02L89.67 378.64L90.84 377.50L90.84 385.50M100.59 380.17L100.20 381.31L99.42 382.07L98.25 382.45L97.86 382.45L96.69 382.07L95.91 381.31L95.52 380.17L95.52 379.79L95.91 378.64L96.69 377.88L97.86 377.50L98.25 377.50L99.42 377.88L100.20 378.64L100.59 380.17L100.59 382.07L100.20 383.98L99.42 385.12L98.25 385.50L97.47 385.50L96.30 385.12L95.91 384.36" stroke="#fff" fill="none" stroke-width="1" stroke-linecap="square"/>
<path d="M51.84 390.50L51.06 390.88L50.28 391.64L49.89 392.40L49.50 393.55L49.50 395.45L49.89 396.60L50.28 397.36L51.06 398.12L51.84 398.50L53.40 398.50L54.18 398.12L54.96 397.36L55.35 396.60L55.74 395.45L55.74 393.55L55.35 392.40L54.96 391.64L54.18 390.88L53.40 390.50L51.84 390.50M63.54 391.64L62.76 390.88L61.59 390.50L60.03 390.50L58.86 390.88L58.08 391.64L58.08 392.40L58.47 393.17L58.86 393.55L59.64 393.93L61.98 394.69L62.76 395.07L63.15 395.45L63.54 396.21L63.54 397.36L62.76 398.12L61.59 398.50L60.03 398.50L58.86 398.12L58.08 397.36M63.93 398.50L71.73 398.50M72.90 390.50L77.19 390.50L74.85 393.55L76.02 393.55L76.80 393.93L77.19 394.31L77.58 395.45L77.58 396.21L77.19 397.36L76.41 398.12L75.24 398.50L74.07 398.50L72.90 398.12L72.51 397.74L72.12 396.98M81.87 390.50L80.70 390.88L80.31 391.64L80.31 392.40L80.70 393.17L81.48 393.55L83.04 393.93L84.21 394.31L84.99 395.07L85.38 395.83L85.38 396.98L84.99 397.74L84.60 398.12L83.43 398.50L81.87 398.50L80.70 398.12L80.31 397.74L79.92 396.98L79.92 395.83L80.31 395.07L81.09 394.31L82.26 393.93L83.82 393.55L84.60 393.17L84.99 392.40L84.99 391.64L84.60 390.88L83.43 390.50L81.87 390.50M88.11 392.40L88.11 392.02L88.50 391.26L88.89 390.88L89.67 390.50L91.23 390.50L92.01 390.88L92.40 391.26L92.79 392.02L92.79 392.79L92.40 393.55L91.62 394.69L87.72 398.50L93.18 398.50M97.86 390.50L96.69 390.88L95.91 392.02L95.52 393.93L95.52 395.07L95.91 396.98L96.69 398.12L97.86 398.50L98.64 398.50L99.81 398.12L100.59 396.98L100.98 395.07L100.98 393.93L100.59 392.02L99.81 390.88L98.64 390.50L97.86 390.50" stroke="#fff" fill="none" stroke-width="1" stroke-linecap="square"/>
<path d="M51.84 402.50L51.06 402.88L50.28 403.64L49.89 404.40L49.50 405.55L49.50 407.45L49.89 408.60L50.28 409.36L51.06 410.12L51.84 410.50L53.40 410.50L54.18 410.12L54.96 409.36L55.35 408.60L55.74 407.45L55.74 405.55L55.35 404.40L54.96 403.64L54.18 402.88L53.40 402.50L51.84 402.50M63.54 403.64L62.76 402.88L61.59 402.50L60.03 402.50L58.86 402.88L58.08 403.64L58.08 404.40L58.47 405.17L58.86 405.55L59.64 405.93L61.98 406.69L62.76 407.07L63.15 407.45L63.54 408.21L63.54 409.36L62.76 410.12L61.59 410.50L60.03 410.50L58.86 410.12L58.08 409.36M63.93 410.50L71.73 410.50M72.90 402.50L77.19 402.50L74.85 405.55L76.02 405.55L76.80 405.93L77.19 406.31L77.58 407.45L77.58 408.21L77.19 409.36L76.41 410.12L75.24 410.50L74.07 410.50L72.90 410.12L72.51 409.74L72.12 408.98M81.87 402.50L80.70 402.88L80.31 403.64L80.31 404.40L80.70 405.17L81.48 405.55L83.04 405.93L84.21 406.31L84.99 407.07L85.38 407.83L85.38 408.98L84.99 409.74L84.60 410.12L83.43 410.50L81.87 410.50L80.70 410.12L80.31 409.74L79.92 408.98L79.92 407.83L80.31 407.07L81.09 406.31L82.26 405.93L83.82 405.55L84.60 405.17L84.99 404.40L84.99 403.64L84.60 402.88L83.43 402.50L81.87 402.50M88.11 404.40L88.11 404.02L88.50 403.26L88.89 402.88L89.67 402.50L91.23 402.50L92.01 402.88L92.40 403.26L92.79 404.02L92.79 404.79L92.40 405.55L91.62 406.69L87.72 410.50L93.18 410.50M96.69 404.02L97.47 403.64L98.64 402.50L98.64 410.50" stroke="#fff" fill="none" stroke-width="1" stroke-linecap="square"/>
<path d="M8.50 444.50L8.50 452.50M8.50 452.50L13.14 452.50M17.01 444.50L13.92 452.50M17.01 444.50L20.10 452.50M15.08 449.83L18.94 449.83M27.07 445.64L26.29 444.88L25.13 444.50L23.58 444.50L22.42 444.88L21.65 445.64L21.65 446.40L22.04 447.17L22.42 447.55L23.20 447.93L25.52 448.69L26.29 449.07L26.68 449.45L27.07 450.21L27.07 451.36L26.29 452.12L25.13 452.50L23.58 452.50L22.42 452.12L21.65 451.36M35.19 446.40L34.80 445.64L34.03 444.88L33.25 444.50L31.71 444.50L30.93 444.88L30.16 445.64L29.77 446.40L29.39 447.55L29.39 449.45L29.77 450.60L30.16 451.36L30.93 452.12L31.71 452.50L33.25 452.50L34.03 452.12L34.80 451.36L35.19 450.60M39.83 444.50L39.06 444.88L38.28 445.64L37.90 446.40L37.51 447.55L37.51 449.45L37.90 450.60L38.28 451.36L39.06 452.12L39.83 452.50L41.38 452.50L42.15 452.12L42.92 451.36L43.31 450.60L43.70 449.45L43.70 447.55L43.31 446.40L42.92 445.64L42.15 444.88L41.38 444.50L39.83 444.50M46.41 449.07L53.37 449.07M56.46 444.50L56.46 452.50M56.46 448.31L57.24 447.55L58.01 447.17L59.17 447.17L59.94 447.55L60.72 448.31L61.10 449.45L61.10 450.21L60.72 451.36L59.94 452.12L59.17 452.50L58.01 452.50L57.24 452.12L56.46 451.36M63.81 447.17L63.81 450.98L64.20 452.12L64.97 452.50L66.13 452.50L66.91 452.12L68.07 450.98M68.07 447.17L68.07 452.50M73.48 444.50L72.71 444.50L71.93 444.88L71.55 446.02L71.55 452.50M70.39 447.17L73.09 447.17M78.12 444.50L77.35 444.50L76.58 444.88L76.19 446.02L76.19 452.50M75.03 447.17L77.74 447.17M80.06 449.45L84.70 449.45L84.70 448.69L84.31 447.93L83.92 447.55L83.15 447.17L81.99 447.17L81.22 447.55L80.44 448.31L80.06 449.45L80.06 450.21L80.44 451.36L81.22 452.12L81.99 452.50L83.15 452.50L83.92 452.12L84.70 451.36M87.41 447.17L87.41 452.50M87.41 449.45L87.79 448.31L88.57 447.55L89.34 447.17L90.50 447.17" stroke="#fff" fill="none" stroke-width="1" stroke-linecap="square"/>
<path d="M86.44 425.83L87.22 425.50L88.39 424.50L88.39 431.50M95.41 424.50L94.24 424.83L93.46 425.83L93.07 427.50L93.07 428.50L93.46 430.17L94.24 431.17L95.41 431.50L96.19 431.50L97.36 431.17L98.14 430.17L98.53 428.50L98.53 427.50L98.14 425.83L97.36 424.83L96.19 424.50L95.41 424.50M103.21 424.50L102.04 424.83L101.26 425.83L100.87 427.50L100.87 428.50L101.26 430.17L102.04 431.17L103.21 431.50L103.99 431.50L105.16 431.17L105.94 430.17L106.33 428.50L106.33 427.50L105.94 425.83L105.16 424.83L103.99 424.50L103.21 424.50" stroke="#fff" fill="none" stroke-width="1" stroke-linecap="square"/>
<path d="M95.02 436.50L93.85 436.83L93.46 437.50L93.46 438.17L93.85 438.83L94.63 439.17L96.19 439.50L97.36 439.83L98.14 440.50L98.53 441.17L98.53 442.17L98.14 442.83L97.75 443.17L96.58 443.50L95.02 443.50L93.85 443.17L93.46 442.83L93.07 442.17L93.07 441.17L93.46 440.50L94.24 439.83L95.41 439.50L96.97 439.17L97.75 438.83L98.14 438.17L98.14 437.50L97.75 436.83L96.58 436.50L95.02 436.50M103.21 436.50L102.04 436.83L101.26 437.83L100.87 439.50L100.87 440.50L101.26 442.17L102.04 443.17L103.21 443.50L103.99 443.50L105.16 443.17L105.94 442.17L106.33 440.50L106.33 439.50L105.94 437.83L105.16 436.83L103.99 436.50L103.21 436.50" stroke="#fff" fill="none" stroke-width="1" stroke-linecap="square"/>
<path d="M93.46 471.17L93.46 470.83L93.85 470.17L94.24 469.83L95.02 469.50L96.58 469.50L97.36 469.83L97.75 470.17L98.14 470.83L98.14 471.50L97.75 472.17L96.97 473.17L93.07 476.50L98.53 476.50M103.21 469.50L102.04 469.83L101.26 470.83L100.87 472.50L100.87 473.50L101.26 475.17L102.04 476.17L103.21 476.50L103.99 476.50L105.16 476.17L105.94 475.17L106.33 473.50L106.33 472.50L105.94 470.83L105.16 469.83L103.99 469.50L103.21 469.50" stroke="#fff" fill="none" stroke-width="1" stroke-linecap="square"/>
<path d="M103.21 480.50L102.04 480.83L101.26 481.83L100.87 483.50L100.87 484.50L101.26 486.17L102.04 487.17L103.21 487.50L103.99 487.50L105.16 487.17L105.94 486.17L106.33 484.50L106.33 483.50L105.94 481.83L105.16 480.83L103.99 480.50L103.21 480.50" stroke="#fff" fill="none" stroke-width="1" stroke-linecap="square"/>
<path d="M308.88 511.40L308.88 511.02L309.26 510.26L309.65 509.88L310.41 509.50L311.94 509.50L312.70 509.88L313.08 510.26L313.47 511.02L313.47 511.79L313.08 512.55L312.32 513.69L308.50 517.50L313.85 517.50M318.43 509.50L317.29 509.88L316.52 511.02L316.14 512.93L316.14 514.07L316.52 515.98L317.29 517.12L318.43 517.50L319.20 517.50L320.34 517.12L321.11 515.98L321.49 514.07L321.49 512.93L321.11 511.02L320.34 509.88L319.20 509.50L318.43 509.50M326.08 509.50L324.93 509.88L324.17 511.02L323.78 512.93L323.78 514.07L324.17 515.98L324.93 517.12L326.08 517.50L326.84 517.50L327.99 517.12L328.75 515.98L329.13 514.07L329.13 512.93L328.75 511.02L327.99 509.88L326.84 509.50L326.08 509.50M335.25 509.50L331.42 514.83L337.16 514.83M335.25 509.50L335.25 517.50M345.56 507.98L338.68 520.17M349.76 509.50L348.62 509.88L347.85 511.02L347.47 512.93L347.47 514.07L347.85 515.98L348.62 517.12L349.76 517.50L350.53 517.50L351.67 517.12L352.44 515.98L352.82 514.07L352.82 512.93L352.44 511.02L351.67 509.88L350.53 509.50L349.76 509.50M358.93 509.50L355.11 514.83L360.84 514.83M358.93 509.50L358.93 517.50M369.25 507.98L362.37 520.17M372.31 511.02L373.07 510.64L374.22 509.50L374.22 517.50M383.77 512.17L383.39 513.31L382.62 514.07L381.48 514.45L381.09 514.45L379.95 514.07L379.18 513.31L378.80 512.17L378.80 511.79L379.18 510.64L379.95 509.88L381.09 509.50L381.48 509.50L382.62 509.88L383.39 510.64L383.77 512.17L383.77 514.07L383.39 515.98L382.62 517.12L381.48 517.50L380.71 517.50L379.57 517.12L379.18 516.36M393.70 511.02L394.47 510.64L395.61 509.50L395.61 517.50M405.17 512.17L404.78 513.31L404.02 514.07L402.87 514.45L402.49 514.45L401.34 514.07L400.58 513.31L400.20 512.17L400.20 511.79L400.58 510.64L401.34 509.88L402.49 509.50L402.87 509.50L404.02 509.88L404.78 510.64L405.17 512.17L405.17 514.07L404.78 515.98L404.02 517.12L402.87 517.50L402.11 517.50L400.96 517.12L400.58 516.36M408.22 512.55L408.99 512.55L408.99 512.17L408.22 512.17L408.22 512.55M408.22 517.50L408.99 517.50L408.99 517.12L408.22 517.12L408.22 517.50M413.95 509.50L412.81 509.88L412.04 511.02L411.66 512.93L411.66 514.07L412.04 515.98L412.81 517.12L413.95 517.50L414.72 517.50L415.86 517.12L416.63 515.98L417.01 514.07L417.01 512.93L416.63 511.02L415.86 509.88L414.72 509.50L413.95 509.50M424.27 510.64L423.89 509.88L422.74 509.50L421.98 509.50L420.83 509.88L420.07 511.02L419.68 512.93L419.68 514.83L420.07 516.36L420.83 517.12L421.98 517.50L422.36 517.50L423.50 517.12L424.27 516.36L424.65 515.21L424.65 514.83L424.27 513.69L423.50 512.93L422.36 512.55L421.98 512.55L420.83 512.93L420.07 513.69L419.68 514.83M427.33 512.55L428.09 512.55L428.09 512.17L427.33 512.17L427.33 512.55M427.33 517.50L428.09 517.50L428.09 517.12L427.33 517.12L427.33 517.50M433.06 509.50L431.91 509.88L431.15 511.02L430.76 512.93L430.76 514.07L431.15 515.98L431.91 517.12L433.06 517.50L433.82 517.50L434.97 517.12L435.73 515.98L436.11 514.07L436.11 512.93L435.73 511.02L434.97 509.88L433.82 509.50L433.06 509.50M440.70 509.50L439.55 509.88L438.79 511.02L438.41 512.93L438.41 514.07L438.79 515.98L439.55 517.12L440.70 517.50L441.46 517.50L442.61 517.12L443.37 515.98L443.75 514.07L443.75 512.93L443.37 511.02L442.61 509.88L441.46 509.50L440.70 509.50M446.43 517.50L447.19 517.50L447.19 517.12L446.43 517.12L446.43 517.50M452.16 509.50L451.01 509.88L450.25 511.02L449.87 512.93L449.87 514.07L450.25 515.98L451.01 517.12L452.16 517.50L452.92 517.50L454.07 517.12L454.83 515.98L455.22 514.07L455.22 512.93L454.83 511.02L454.07 509.88L452.92 509.50L452.16 509.50M459.80 509.50L458.66 509.88L457.89 511.02L457.51 512.93L457.51 514.07L457.89 515.98L458.66 517.12L459.80 517.50L460.57 517.50L461.71 517.12L462.48 515.98L462.86 514.07L462.86 512.93L462.48 511.02L461.71 509.88L460.57 509.50L459.80 509.50M467.44 509.50L466.30 509.88L465.53 511.02L465.15 512.93L465.15 514.07L465.53 515.98L466.30 517.12L467.44 517.50L468.21 517.50L469.35 517.12L470.12 515.98L470.50 514.07L470.50 512.93L470.12 511.02L469.35 509.88L468.21 509.50L467.44 509.50" stroke="#fff" fill="none" stroke-width="1" stroke-linecap="square"/>
<path d="M19.16 514.93L18.84 514.36L18.22 513.79L17.60 513.50L16.36 513.50L15.74 513.79L15.12 514.36L14.81 514.93L14.50 515.79L14.50 517.21L14.81 518.07L15.12 518.64L15.74 519.21L16.36 519.50L17.60 519.50L18.22 519.21L18.84 518.64L19.16 518.07M21.95 514.64L22.57 514.36L23.50 513.50L23.50 519.50" stroke="#ff0000" fill="none" stroke-width="1" stroke-linecap="square"/>
<path d="M40.21 514.93L39.90 514.36L39.27 513.79L38.64 513.50L37.39 513.50L36.76 513.79L36.13 514.36L35.81 514.93L35.50 515.79L35.50 517.21L35.81 518.07L36.13 518.64L36.76 519.21L37.39 519.50L38.64 519.50L39.27 519.21L39.90 518.64L40.21 518.07M42.41 514.93L42.41 514.64L42.73 514.07L43.04 513.79L43.67 513.50L44.93 513.50L45.56 513.79L45.87 514.07L46.19 514.64L46.19 515.21L45.87 515.79L45.24 516.64L42.10 519.50L46.50 519.50" stroke="#00ff00" fill="none" stroke-width="1" stroke-linecap="square"/>
<path d="M61.21 514.93L60.90 514.36L60.27 513.79L59.64 513.50L58.39 513.50L57.76 513.79L57.13 514.36L56.81 514.93L56.50 515.79L56.50 517.21L56.81 518.07L57.13 518.64L57.76 519.21L58.39 519.50L59.64 519.50L60.27 519.21L60.90 518.64L61.21 518.07M63.73 513.50L67.19 513.50L65.30 515.79L66.24 515.79L66.87 516.07L67.19 516.36L67.50 517.21L67.50 517.79L67.19 518.64L66.56 519.21L65.61 519.50L64.67 519.50L63.73 519.21L63.41 518.93L63.10 518.36" stroke="#99e6f2" fill="none" stroke-width="1" stroke-linecap="square"/>
<path d="M77.50 513.50L77.50 519.50M77.50 513.50L81.61 513.50M77.50 516.36L80.03 516.36M77.50 519.50L81.61 519.50M83.50 513.50L83.50 519.50M87.29 513.50L87.29 519.50M85.08 513.50L89.50 513.50" stroke="#ffff00" fill="none" stroke-width="1" stroke-linecap="square"/>
<path d="M105.55 30.50L101.65 30.50L101.26 33.50L101.65 33.17L102.82 32.83L103.99 32.83L105.16 33.17L105.94 33.83L106.33 34.83L106.33 35.50L105.94 36.50L105.16 37.17L103.99 37.50L102.82 37.50L101.65 37.17L101.26 36.83L100.87 36.17" stroke="#fff" fill="none" stroke-width="1" stroke-linecap="square"/>
<path d="M104.77 39.50L100.87 44.17L106.72 44.17M104.77 39.50L104.77 46.50" stroke="#fff" fill="none" stroke-width="1" stroke-linecap="square"/>
<path d="M101.65 49.50L105.94 49.50L103.60 52.17L104.77 52.17L105.55 52.50L105.94 52.83L106.33 53.83L106.33 54.50L105.94 55.50L105.16 56.17L103.99 56.50L102.82 56.50L101.65 56.17L101.26 55.83L100.87 55.17" stroke="#fff" fill="none" stroke-width="1" stroke-linecap="square"/>
<path d="M101.26 60.17L101.26 59.83L101.65 59.17L102.04 58.83L102.82 58.50L104.38 58.50L105.16 58.83L105.55 59.17L105.94 59.83L105.94 60.50L105.55 61.17L104.77 62.17L100.87 65.50L106.33 65.50" stroke="#fff" fill="none" stroke-width="1" stroke-linecap="square"/>
<path d="M102.04 69.83L102.82 69.50L103.99 68.50L103.99 75.50" stroke="#fff" fill="none" stroke-width="1" stroke-linecap="square"/>
</svg></body></html>
